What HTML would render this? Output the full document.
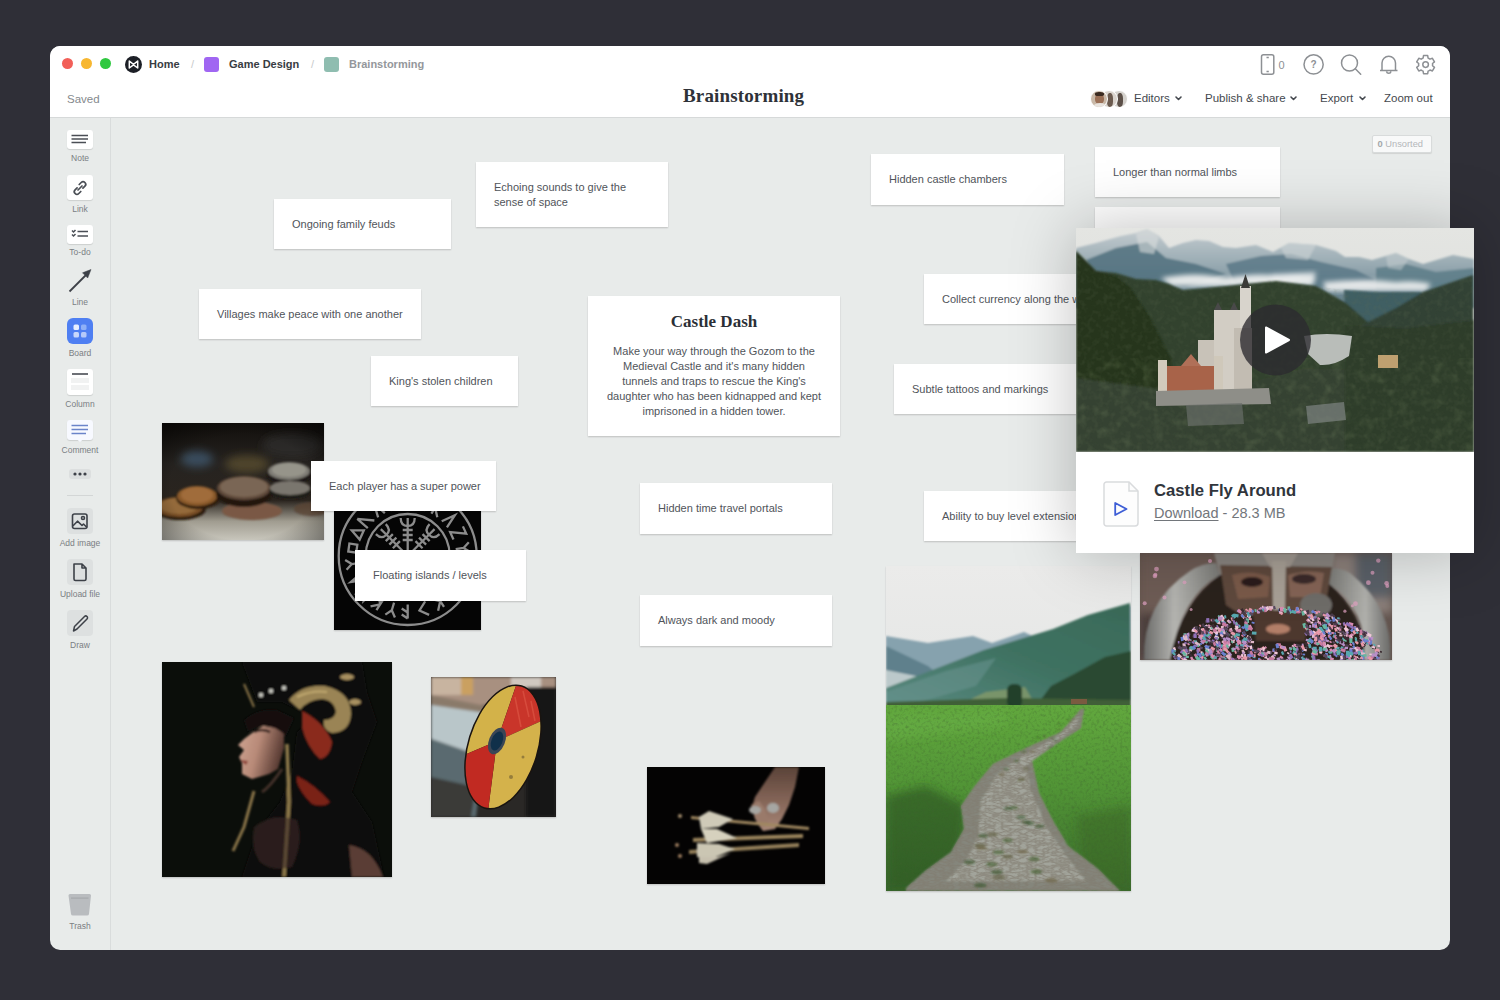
<!DOCTYPE html>
<html><head><meta charset="utf-8">
<style>
*{box-sizing:border-box;margin:0;padding:0}
html,body{width:1500px;height:1000px;overflow:hidden;background:#2f2f37;font-family:"Liberation Sans",sans-serif}
.abs{position:absolute}
#win{position:absolute;left:50px;top:46px;width:1400px;height:904px;border-radius:10px;overflow:hidden;background:#e8ebea}
#hdr{position:absolute;left:0;top:0;width:1400px;height:72px;background:#fff;border-bottom:1px solid #d6d9d9}
.dot{position:absolute;width:11px;height:11px;border-radius:50%;top:12px}
.crumb{position:absolute;top:11px;font-size:11px;font-weight:700;color:#383c42;line-height:14px}
.menu{position:absolute;top:45px;font-size:11.5px;color:#44484e;line-height:14px}
#side{position:absolute;left:0;top:72px;width:61px;height:832px;border-right:1px solid #d9dcdc}
.tile{position:absolute;left:17px;width:26px;background:#fff;border-radius:3px;box-shadow:0 1px 1px rgba(0,0,0,.12)}
.lbl{position:absolute;left:0;width:60px;text-align:center;font-size:8.5px;color:#7a7e83;line-height:10px}
.card{position:absolute;background:#fff;box-shadow:0 1px 1.5px rgba(0,0,0,.18);font-size:11px;color:#50545a;line-height:15px}
.card span{position:absolute}
.img{position:absolute;overflow:hidden;box-shadow:0 1px 1.5px rgba(0,0,0,.18)}
</style></head><body>
<div id="win">
  <div id="hdr">
    <div class="dot" style="left:12px;background:#f25f58"></div>
    <div class="dot" style="left:31px;background:#f7b731"></div>
    <div class="dot" style="left:49.5px;background:#2fc840"></div>
    <svg class="abs" style="left:74.5px;top:10px" width="17" height="17"><circle cx="8.5" cy="8.5" r="8.5" fill="#1c1f26"/><path d="M4.3 5 L8.5 8.3 L12.7 5 V12 L8.5 8.9 L4.3 12 Z" fill="none" stroke="#fff" stroke-width="1.5" stroke-linejoin="round"/></svg>
    <div class="crumb" style="left:99px">Home</div>
    <div class="crumb" style="left:141px;color:#c8cacc;font-weight:400">/</div>
    <div class="abs" style="left:154px;top:11px;width:15px;height:15px;border-radius:3px;background:#a066f2"></div>
    <div class="crumb" style="left:179px">Game Design</div>
    <div class="crumb" style="left:261px;color:#c8cacc;font-weight:400">/</div>
    <div class="abs" style="left:274px;top:11px;width:15px;height:15px;border-radius:3px;background:#8fbdb0"></div>
    <div class="crumb" style="left:299px;color:#94979b">Brainstorming</div>
    <div class="menu" style="left:17px;top:46px;color:#85898d">Saved</div>
    <div class="abs" style="left:633px;top:39px;font-family:'Liberation Serif',serif;font-weight:700;font-size:19px;color:#2e3238;line-height:22px;letter-spacing:0.15px">Brainstorming</div>
    
    <svg class="abs" style="left:1200px;top:0px" width="200" height="40"><g fill="none" stroke="#8d9094" stroke-width="1.5">
      <rect x="11.5" y="8.8" width="12.3" height="19.5" rx="2"/>
      <line x1="16.5" y1="11.5" x2="18.8" y2="11.5"/><line x1="16.5" y1="25.5" x2="18.8" y2="25.5"/>
      <circle cx="63.6" cy="18.4" r="9.6"/>
      <circle cx="99.5" cy="17" r="8"/><line x1="105.3" y1="22.8" x2="110.7" y2="28.2" stroke-linecap="round"/>
      <path d="M130 24.5 H147.5 M132 24.5 V17 A6.7 6.7 0 0 1 145.5 17 V24.5 M136.5 25.5 A2.3 2.3 0 0 0 141 25.5" stroke-linejoin="round"/>
      <circle cx="175.6" cy="18.6" r="2.8"/>
    </g>
    <path fill="none" stroke="#8d9094" stroke-width="1.5" stroke-linejoin="round" d="M172.10 12.54 L173.09 12.06 L173.51 9.54 L177.69 9.54 L178.11 12.06 L179.10 12.54 L180.01 13.16 L182.40 12.26 L184.49 15.88 L182.51 17.50 L182.60 18.60 L182.51 19.70 L184.49 21.32 L182.40 24.94 L180.01 24.04 L179.10 24.66 L178.11 25.14 L177.69 27.66 L173.51 27.66 L173.09 25.14 L172.10 24.66 L171.19 24.04 L168.80 24.94 L166.71 21.32 L168.69 19.70 L168.60 18.60 L168.69 17.50 L166.71 15.88 L168.80 12.26 L171.19 13.16 Z"/>
    <text x="63.6" y="22" text-anchor="middle" font-family="Liberation Sans" font-size="10" font-weight="700" fill="#8d9094">?</text>
    <text x="28.5" y="23" font-family="Liberation Sans" font-size="11" fill="#8d9094">0</text>
    </svg>
    <div class="abs" style="left:1060px;top:43.5px;width:18px;height:18px;border-radius:50%;background:#d5d2cd;border:1.5px solid #fff;overflow:hidden"><div class="abs" style="left:6px;top:2px;width:6px;height:14px;border-radius:40%;background:#5c5048"></div></div><div class="abs" style="left:1050px;top:43.5px;width:18px;height:18px;border-radius:50%;background:#d9d3cc;border:1.5px solid #fff;overflow:hidden"><div class="abs" style="left:6px;top:2px;width:6px;height:14px;border-radius:40%;background:#6b5a4e"></div></div><div class="abs" style="left:1040px;top:43.5px;width:18px;height:18px;border-radius:50%;background:#c9b9a8;border:1.5px solid #fff;overflow:hidden"><div class="abs" style="left:4px;top:3px;width:9px;height:10px;border-radius:45%;background:#9a6f55"></div><div class="abs" style="left:2px;top:12px;width:14px;height:8px;border-radius:50%;background:#e8e4df"></div><div class="abs" style="left:4px;top:1.5px;width:9px;height:4px;border-radius:40%;background:#3a2a20"></div></div>
    
    
    <svg class="abs" style="left:1124px;top:48px" width="300" height="10"><g fill="none" stroke="#44484e" stroke-width="1.6" stroke-linecap="round" stroke-linejoin="round"><path d="M2 3 L4.5 5.5 L7 3"/><path d="M117 3 L119.5 5.5 L122 3"/><path d="M186 3 L188.5 5.5 L191 3"/></g></svg>
<div class="menu" style="left:1084px">Editors</div>
    <div class="menu" style="left:1155px">Publish &amp; share</div>
    <div class="menu" style="left:1270px">Export</div>
    <div class="menu" style="left:1334px">Zoom out</div>
  </div>
  <div id="side">
    <div class="tile" style="top:12px;height:18.5px"><svg width="26" height="18.5" style="position:absolute;left:0;top:0"><g stroke="#4a4e55" stroke-width="1.6"><line x1="4.5" y1="5.5" x2="21" y2="5.5"/><line x1="4.5" y1="9" x2="21" y2="9"/><line x1="4.5" y1="12.5" x2="19" y2="12.5"/></g></svg></div>
    <div class="lbl" style="top:35.0px">Note</div>
    <div class="tile" style="top:56.5px;height:25.5px"><svg width="26" height="26" style="position:absolute;left:0;top:0"><g fill="none" stroke="#4a4e55" stroke-width="1.7" stroke-linecap="round"><path d="M12.2 9.5 L14.2 7.5 A2.6 2.6 0 0 1 17.9 11.2 L15.9 13.2"/><path d="M13.8 16.5 L11.8 18.5 A2.6 2.6 0 0 1 8.1 14.8 L10.1 12.8"/><line x1="11" y1="15" x2="15" y2="11"/></g></svg></div>
    <div class="lbl" style="top:86.0px">Link</div>
    <div class="tile" style="top:107px;height:18.5px"><svg width="26" height="18.5" style="position:absolute;left:0;top:0"><g fill="none" stroke="#4a4e55" stroke-width="1.5"><path d="M5 5.5 L6.5 7 L8.5 5"/><path d="M5 9.5 L6.5 11 L8.5 9"/><line x1="10.5" y1="6.5" x2="21" y2="6.5" stroke-width="1.7"/><line x1="10.5" y1="11" x2="21" y2="11" stroke-width="1.7"/></g></svg></div>
    <div class="lbl" style="top:129.2px">To-do</div>
    <svg class="abs" style="left:14px;top:147px" width="32" height="32"><g stroke="#3d4148" stroke-width="1.8" fill="#3d4148"><line x1="5.5" y1="26.5" x2="24" y2="8"/><path d="M27 4.5 L18.5 7.8 L23.7 13 Z" stroke-width="0.5"/></g></svg>
    <div class="lbl" style="top:178.7px">Line</div>
    <div class="abs" style="left:17px;top:200px;width:26px;height:26px;border-radius:6px;background:#4f7ff2"><svg width="26" height="26" style="position:absolute;left:0;top:0"><rect x="6.5" y="6.5" width="5.5" height="5.5" rx="1.5" fill="#e8efff"/><rect x="14" y="6.5" width="5.5" height="5.5" rx="1.5" fill="#8fb0f7"/><rect x="6.5" y="14" width="5.5" height="5.5" rx="1.5" fill="#c9d8fb"/><rect x="14" y="14" width="5.5" height="5.5" rx="1.5" fill="#b5c9f9"/></svg></div>
    <div class="lbl" style="top:229.7px">Board</div>
    <div class="tile" style="top:250.5px;height:26.5px"><svg width="26" height="26" style="position:absolute;left:0;top:0"><line x1="5" y1="5" x2="21" y2="5" stroke="#3d4148" stroke-width="1.5"/><rect x="4" y="9" width="18" height="5" fill="#f1f2f2"/><rect x="4" y="16" width="18" height="5" fill="#f1f2f2"/></svg></div>
    <div class="lbl" style="top:281.2px">Column</div>
    <div class="tile" style="top:302px;height:19.5px;background:#f7f9ff"><svg width="26" height="24" style="position:absolute;left:0;top:0;overflow:visible"><g stroke="#6a84c9" stroke-width="1.5"><line x1="4.5" y1="5.5" x2="21" y2="5.5"/><line x1="4.5" y1="9.5" x2="21" y2="9.5"/><line x1="4.5" y1="13.5" x2="19" y2="13.5"/></g><path d="M10 19.5 L13 22 L16 19.5 Z" fill="#f7f9ff"/></svg></div>
    <div class="lbl" style="top:327.0px">Comment</div>
    <div class="abs" style="left:19px;top:351px;width:21.5px;height:10px;border-radius:3px;background:#dcdfdf"><svg width="22" height="10" style="position:absolute;left:0;top:0"><circle cx="6" cy="5" r="1.6" fill="#3d4148"/><circle cx="11" cy="5" r="1.6" fill="#3d4148"/><circle cx="16" cy="5" r="1.6" fill="#3d4148"/></svg></div>
    <div class="abs" style="left:17px;top:376.5px;width:26px;height:1px;background:#d3d6d6"></div>
    <div class="abs" style="left:17px;top:390px;width:25.5px;height:25.5px;border-radius:4px;background:#dde0e0"><svg width="26" height="26" style="position:absolute;left:0;top:0"><g fill="none" stroke="#3d4148" stroke-width="1.6" stroke-linejoin="round"><rect x="5.5" y="6" width="14.5" height="14.5" rx="2"/><path d="M5.8 18 L10.5 13.2 L15 17.5 L16.5 16 L20 19.5"/><circle cx="16" cy="10" r="1.5"/></g></svg></div>
    <div class="lbl" style="top:419.8px">Add image</div>
    <div class="abs" style="left:17px;top:441px;width:25.5px;height:25.5px;border-radius:4px;background:#dde0e0"><svg width="26" height="26" style="position:absolute;left:0;top:0"><path d="M7 5 H15 L19 9 V20 A1.5 1.5 0 0 1 17.5 21.5 H8.5 A1.5 1.5 0 0 1 7 20 Z M15 5 V9 H19" fill="none" stroke="#3d4148" stroke-width="1.6" stroke-linejoin="round"/></svg></div>
    <div class="lbl" style="top:471.0px">Upload file</div>
    <div class="abs" style="left:17px;top:492px;width:25.5px;height:25.5px;border-radius:4px;background:#dde0e0"><svg width="26" height="26" style="position:absolute;left:0;top:0"><path d="M6.5 21 L7.5 16.5 L17.5 6.5 A1.6 1.6 0 0 1 20 9 L10 19 Z" fill="none" stroke="#3d4148" stroke-width="1.5" stroke-linejoin="round"/></svg></div>
    <div class="lbl" style="top:522.2px">Draw</div>
    <svg class="abs" style="left:18px;top:775px" width="24" height="24"><path d="M0.5 2.5 Q0.5 1 2 1 H21.5 Q23 1 23 2.5 L21 21 Q20.8 22.5 19 22.5 H5 Q3.2 22.5 3 21 Z" fill="#b9bcbf"/><rect x="3" y="4.5" width="17.5" height="1.2" fill="#a5a8ac"/></svg>
    <div class="lbl" style="top:803.4px">Trash</div>
  </div>
</div>
<!-- canvas items (page coords) -->
<div class="abs" style="left:1371.5px;top:134.5px;width:60.5px;height:18.5px;background:#f3f4f4;border:1px solid #d8dbdb;border-radius:2px;box-shadow:0 1px 1px rgba(0,0,0,.1);font-size:9.3px;line-height:16px;color:#b4b7ba;padding-left:5px;background:#f8f9f9;white-space:nowrap"><b style="color:#a4a7aa">0</b> Unsorted</div>

<div class="card" style="left:274px;top:199px;width:177px;height:50px"><span style="left:18px;top:18px">Ongoing family feuds</span></div>
<div class="card" style="left:476px;top:162px;width:192px;height:65px"><span style="left:18px;top:18px;width:160px">Echoing sounds to give the sense of space</span></div>
<div class="card" style="left:199px;top:289px;width:222px;height:50px"><span style="left:18px;top:18px">Villages make peace with one another</span></div>
<div class="card" style="left:371px;top:356px;width:147px;height:50px"><span style="left:18px;top:18px">King's stolen children</span></div>
<div class="card" style="left:588px;top:296px;width:252px;height:140px">
  <div class="abs" style="left:0;top:16.4px;width:252px;text-align:center;font-family:'Liberation Serif',serif;font-weight:700;font-size:17px;line-height:20px;color:#2b2f36">Castle Dash</div>
  <div class="abs" style="left:0;top:47.6px;width:252px;text-align:center;line-height:15px">Make your way through the Gozom to the<br>Medieval Castle and it's many hidden<br>tunnels and traps to rescue the King's<br>daughter who has been kidnapped and kept<br>imprisoned in a hidden tower.</div>
</div>
<div class="card" style="left:871px;top:154px;width:193px;height:51px"><span style="left:18px;top:18px">Hidden castle chambers</span></div>
<div class="card" style="left:1095px;top:147px;width:185px;height:50px"><span style="left:18px;top:18px">Longer than normal limbs</span></div>
<div class="card" style="left:1095px;top:207px;width:185px;height:50px"></div>
<div class="card" style="left:924px;top:274px;width:185px;height:50px"><span style="left:18px;top:18px;white-space:nowrap">Collect currency along the way</span></div>
<div class="card" style="left:894px;top:364px;width:185px;height:50px"><span style="left:18px;top:18px">Subtle tattoos and markings</span></div>
<div class="card" style="left:924px;top:491px;width:185px;height:50px"><span style="left:18px;top:18px;white-space:nowrap">Ability to buy level extensions</span></div>
<div class="card" style="left:640px;top:483px;width:192px;height:51px"><span style="left:18px;top:18px">Hidden time travel portals</span></div>
<div class="card" style="left:640px;top:595px;width:192px;height:51px"><span style="left:18px;top:18px">Always dark and moody</span></div>
<div class="img" style="left:162px;top:423px;width:162px;height:117px;"><svg width="162" height="117" viewBox="0 0 162 117">
<defs><filter id="b1" x="-20%" y="-20%" width="140%" height="140%"><feGaussianBlur stdDeviation="4"/></filter>
<filter id="b2"><feGaussianBlur stdDeviation="1"/></filter>
<linearGradient id="cg1" x1="0" y1="0" x2="0" y2="1"><stop offset="0" stop-color="#120f0c"/><stop offset="0.35" stop-color="#262320"/><stop offset="0.66" stop-color="#2a241e"/><stop offset="0.84" stop-color="#a09c90"/><stop offset="1" stop-color="#c8c6bc"/></linearGradient>
<radialGradient id="cv" cx="0.5" cy="0.55" r="0.75"><stop offset="0.6" stop-color="#000" stop-opacity="0"/><stop offset="1" stop-color="#000" stop-opacity="0.55"/></radialGradient></defs>
<rect width="162" height="117" fill="url(#cg1)"/>
<g filter="url(#b1)"><ellipse cx="35" cy="36" rx="16" ry="8" fill="#4a6a88" opacity="0.6"/><ellipse cx="85" cy="41" rx="22" ry="9" fill="#6a5a30" opacity="0.6"/><ellipse cx="130" cy="22" rx="30" ry="12" fill="#3a3a36" opacity="0.5"/></g>
<g filter="url(#b2)">
<ellipse cx="18" cy="86" rx="26" ry="11" fill="#2a1a0e"/><ellipse cx="17" cy="84" rx="24" ry="10" fill="#7a5028"/><ellipse cx="17" cy="83" rx="19" ry="8" fill="#946a3a"/>
<ellipse cx="36" cy="75" rx="22" ry="11" fill="#2e1c0c"/><ellipse cx="35" cy="73" rx="20" ry="10" fill="#8a5a2c"/><ellipse cx="35" cy="72" rx="16" ry="8" fill="#a06c3a"/>
<ellipse cx="90" cy="88" rx="30" ry="9" fill="#7a5844"/>
<ellipse cx="82" cy="71" rx="28" ry="13" fill="#201610"/><ellipse cx="82" cy="65" rx="27" ry="12" fill="#5e4a3a"/><ellipse cx="82" cy="64" rx="24" ry="10" fill="#7a6654"/>
<ellipse cx="127" cy="52" rx="22" ry="10" fill="#1a1612"/><ellipse cx="127" cy="48" rx="21" ry="9" fill="#7e7c74"/><ellipse cx="127" cy="47" rx="17" ry="7" fill="#96948a"/>
<ellipse cx="128" cy="68" rx="21" ry="8" fill="#1e1a16"/><ellipse cx="128" cy="65" rx="20" ry="7" fill="#7a766e"/>
<ellipse cx="150" cy="86" rx="18" ry="7" fill="#5a4436" opacity="0.8"/>
</g>
<rect width="162" height="117" fill="url(#cv)"/>
</svg></div>
<div class="img" style="left:334px;top:482px;width:147px;height:148px"><svg width="147" height="148" viewBox="0 0 147 148">
<rect width="147" height="148" fill="#050505"/>
<g fill="none" stroke="#8c8c8c" stroke-width="2.3" stroke-linecap="butt" stroke-linejoin="miter">
<circle cx="73.7" cy="74" r="69"/>
<circle cx="73.7" cy="74" r="42"/>
<path transform="translate(73.7 18.5) rotate(0.0)" d="M-5 7 V-7 L0 0 L5 -7 V7"/><path transform="translate(89.3 20.7) rotate(16.4)" d="M-4 -7 V7 M-4 -7 L4 -2 L-4 2 L4 7"/><path transform="translate(103.7 27.3) rotate(32.7)" d="M-3 -7 V7 M-3 0 L4 -7 M-3 0 L4 7"/><path transform="translate(115.6 37.7) rotate(49.1)" d="M-4 7 L0 -7 L4 7"/><path transform="translate(124.2 50.9) rotate(65.5)" d="M-4 -7 L4 -7 L-4 7 L4 7"/><path transform="translate(128.6 66.1) rotate(81.8)" d="M0 7 V-1 M0 -1 L-5 -7 M0 -1 L5 -7"/><path transform="translate(128.6 81.9) rotate(98.2)" d="M-5 -7 V7 M-5 -7 L5 7"/><path transform="translate(124.2 97.1) rotate(114.5)" d="M0 -6 L5 5 H-5 Z"/><path transform="translate(115.6 110.3) rotate(130.9)" d="M-5 -7 V7 M-5 -7 L5 7"/><path transform="translate(103.7 120.7) rotate(147.3)" d="M-3 -7 V7 M-3 0 L4 -7 M-3 0 L4 7"/><path transform="translate(89.3 127.3) rotate(163.6)" d="M-4 -7 L4 0 L-4 7"/><path transform="translate(73.7 129.5) rotate(180.0)" d="M0 -7 V7 M0 -7 L6 -3 M0 -1 L6 3"/><path transform="translate(58.1 127.3) rotate(196.4)" d="M0 7 V-1 M0 -1 L-5 -7 M0 -1 L5 -7"/><path transform="translate(43.7 120.7) rotate(212.7)" d="M-3 -7 V7 M-3 0 L4 -7 M-3 0 L4 7"/><path transform="translate(31.8 110.3) rotate(229.1)" d="M-5 7 V-7 L0 0 L5 -7 V7"/><path transform="translate(23.2 97.1) rotate(245.5)" d="M-4 7 L0 -7 L4 7"/><path transform="translate(18.8 81.9) rotate(261.8)" d="M0 7 V-1 M0 -1 L-5 -7 M0 -1 L5 -7"/><path transform="translate(18.8 66.1) rotate(278.2)" d="M-4 -4 H4 V4 H-4 Z"/><path transform="translate(23.2 50.9) rotate(294.5)" d="M0 -6 L5 5 H-5 Z"/><path transform="translate(31.8 37.7) rotate(310.9)" d="M-5 -7 V7 M-5 -7 L5 7"/><path transform="translate(43.7 27.3) rotate(327.3)" d="M-4 7 L0 -7 L4 7"/><path transform="translate(58.1 20.7) rotate(343.6)" d="M-4 -7 L4 0 L-4 7"/><g transform="translate(73.7 74.0) rotate(0.0)"><path d="M0 0 V-36 M-7 -38 Q-7 -30 0 -30 Q7 -30 7 -38 M0 -38 V-30 M-5 -26 H5 M-5 -21 H5 M-5 -16 H5"/></g><g transform="translate(73.7 74.0) rotate(-45.0)"><path d="M0 0 V-36 M-7 -38 Q-7 -30 0 -30 Q7 -30 7 -38 M0 -38 V-30 M-5 -26 H5 M-5 -21 H5 M-5 -16 H5"/></g><g transform="translate(73.7 74.0) rotate(45.0)"><path d="M0 0 V-36 M-7 -38 Q-7 -30 0 -30 Q7 -30 7 -38 M0 -38 V-30 M-5 -26 H5 M-5 -21 H5 M-5 -16 H5"/></g>
</g></svg></div>
<div class="card" style="left:311px;top:461px;width:185px;height:50px"><span style="left:18px;top:18px">Each player has a super power</span></div>
<div class="card" style="left:355px;top:550px;width:171px;height:51px"><span style="left:18px;top:18px">Floating islands / levels</span></div>
<div class="img" style="left:162px;top:662px;width:230px;height:215px;"><svg width="230" height="215" viewBox="0 0 230 215">
<defs><filter id="wb"><feGaussianBlur stdDeviation="0.9"/></filter><filter id="wb2" x="-50%" y="-50%" width="200%" height="200%"><feGaussianBlur stdDeviation="6"/></filter>
<linearGradient id="wface" x1="0" y1="0" x2="1" y2="0.3"><stop offset="0" stop-color="#d0a694"/><stop offset="0.5" stop-color="#b88a78"/><stop offset="1" stop-color="#5a3c34"/></linearGradient></defs>
<rect width="230" height="215" fill="#0b0e0a"/>

<g filter="url(#wb)">
<path d="M122 67 L101 64 L90 71 L82 77 L76 83 L82 88 L77 95 L80 101 L80 112 L90 117 L107 112 L116 107 L122 86 Z" fill="url(#wface)"/>
<path d="M78 98 L86 99 L84 103 Z" fill="#8a3a30"/>
<path d="M92 70 Q100 66 108 70" stroke="#2a1a18" stroke-width="2.5" fill="none"/>
<path d="M82 58 Q95 46 115 48 L132 56 L124 74 Q112 62 98 64 L86 70 Z" fill="#121010"/>
<path d="M80 0 L200 0 L205 30 L215 60 L200 100 L190 130 L210 160 L222 215 L80 215 L95 170 L118 140 L130 110 L135 70 L150 55 L120 40 L95 40 Z" fill="#0f0d0c"/>

<path d="M140 49 Q162 60 170 80 Q168 95 158 97 Q145 85 140 65 Z" fill="#8a2c1e"/>
<path d="M135 114 Q152 122 168 140 Q162 146 150 142 Q138 130 135 120 Z" fill="#7a2418"/>
<path d="M127 38 Q140 22 163 24 Q189 30 189 52 Q188 70 170 71 Q160 68 162 58 Q172 58 174 50 Q172 38 160 37 Q145 38 138 48 Z" fill="#9a8454"/>
<path d="M135 35 Q150 28 165 30" stroke="#c0a870" stroke-width="2" fill="none"/>
<path d="M92 129 L82 165 L71 189" stroke="#8a7448" stroke-width="3" fill="none"/>
<path d="M125 82 L127 140 L122 215" stroke="#8f7a4c" stroke-width="3.5" fill="none"/>
<path d="M82 22 L92 45" stroke="#8a7448" stroke-width="2"/>
<circle cx="99" cy="33" r="2.2" fill="#c8c8c0"/><circle cx="109" cy="29" r="2.2" fill="#c8c8c0"/><circle cx="122" cy="26" r="2.2" fill="#c8c8c0"/>
<ellipse cx="185" cy="15" rx="7" ry="3" fill="#a89060"/><ellipse cx="193" cy="40" rx="6" ry="3" fill="#a89060"/>
<path d="M92 165 Q110 150 135 158 Q142 180 130 205 Q110 210 98 200 Q88 185 92 165 Z" fill="#3a2a24" opacity="0.6"/>
<path d="M187 183 Q210 186 221 215 L190 215 Z" fill="#5a3e36"/>
<path d="M120 107 Q108 125 100 130" stroke="#6a4a40" stroke-width="3" fill="none" opacity="0.6"/>
</g></svg></div>
<div class="img" style="left:431px;top:677px;width:125px;height:140px;"><svg width="125" height="140" viewBox="0 0 125 140">
<defs><filter id="sb"><feGaussianBlur stdDeviation="1.5"/></filter><filter id="sb0"><feGaussianBlur stdDeviation="0.6"/></filter><clipPath id="sc"><ellipse cx="0" cy="0" rx="34" ry="63"/></clipPath></defs>
<rect width="125" height="140" fill="#2a2826"/>
<g filter="url(#sb)">
<rect x="0" y="0" width="125" height="28" fill="#a89080"/>
<rect x="0" y="0" width="40" height="18" fill="#c8b4a0"/>
<rect x="30" y="0" width="12" height="18" fill="#caa060"/>
<rect x="80" y="0" width="30" height="14" fill="#d0c8c0"/>
<path d="M0 18 L60 30 L60 38 L0 30 Z" fill="#8a7a6a"/>
<path d="M0 28 L55 36 L52 80 L0 62 Z" fill="#b9c6c9"/>
<path d="M0 62 L52 80 L45 140 L0 140 Z" fill="#5a6a70"/>
<path d="M0 100 L45 110 L40 140 L0 140 Z" fill="#3a3a38"/>
<rect x="95" y="10" width="30" height="130" fill="#161514"/>
</g>
<clipPath id="sc2"><ellipse cx="72" cy="70" rx="34" ry="63" transform="rotate(17 72 70)"/></clipPath>
<ellipse cx="72" cy="70" rx="35.5" ry="64.5" transform="rotate(17 72 70)" fill="#1a1410"/>
<g clip-path="url(#sc2)" filter="url(#sb0)">
<path d="M66 64 L10 88 L0 0 L88 0 Z" fill="#d3b24a"/>
<path d="M66 64 L88 0 L140 0 L130 35 Z" fill="#c9352a"/>
<path d="M66 64 L130 35 L140 150 L55 150 Z" fill="#d4b24c"/>
<path d="M66 64 L55 150 L0 150 L10 88 Z" fill="#c12c24"/>
<path d="M92 14 L98 40 M84 20 L90 50 M100 24 L104 44" stroke="#e05a48" stroke-width="1.5" opacity="0.6"/>
<circle cx="80" cy="100" r="2" fill="#6a5a30" opacity="0.6"/><circle cx="92" cy="80" r="1.5" fill="#6a5a30" opacity="0.6"/>
</g>
<ellipse cx="66" cy="64" rx="8" ry="14" transform="rotate(22 66 64)" fill="#3a4656"/>
<ellipse cx="66" cy="64" rx="5.5" ry="10" transform="rotate(22 66 64)" fill="#10304a"/>
</svg></div>
<div class="img" style="left:647px;top:767px;width:178px;height:117px;"><svg width="178" height="117" viewBox="0 0 178 117">
<defs><filter id="ab"><feGaussianBlur stdDeviation="0.9"/></filter><linearGradient id="hand" x1="0" y1="0" x2="0" y2="1"><stop offset="0" stop-color="#5a4238"/><stop offset="0.6" stop-color="#8a6a5c"/><stop offset="1" stop-color="#a88878"/></linearGradient></defs>
<rect width="178" height="117" fill="#040303"/>
<g filter="url(#ab)">
<path d="M128 0 L152 0 L148 20 L142 38 L135 52 L128 62 L116 64 L110 56 L105 40 L108 30 L120 12 Z" fill="url(#hand)"/>
<path d="M104 38 L108 52 L114 60 L122 58 L118 42 L112 34 Z" fill="#9a7a6a"/>
<ellipse cx="108" cy="43" rx="6" ry="4" fill="#a6a6a2"/><ellipse cx="126" cy="41" rx="6" ry="5" fill="#a6a6a2"/>
<path d="M44 49 L162 60 L162 63 L44 52 Z" fill="#a08860"/>
<path d="M46 71 L156 67 L156 71 L46 75 Z" fill="#9a845c"/>
<path d="M42 83 L152 76 L152 80 L42 87 Z" fill="#94805a"/>
<path d="M52 50 L62 44 L86 52 L72 60 L54 62 Z" fill="#cfcab8"/>
<path d="M54 62 L70 62 L90 71 L60 76 Z" fill="#d6d1be"/>
<path d="M50 76 L72 77 L88 82 L64 92 L50 90 Z" fill="#cbc6b3"/>
<path d="M52 90 L70 90 L84 86 L60 97 L52 96 Z" fill="#c6c0ae"/>
<circle cx="33" cy="49" r="2" fill="#a89070"/><circle cx="30" cy="78" r="2" fill="#a08060"/><circle cx="33" cy="89" r="2" fill="#a08060"/>
</g></svg></div>
<div class="img" style="left:886px;top:566px;width:245px;height:325px;"><svg width="245" height="325" viewBox="0 0 245 325">
<defs><filter id="lb"><feGaussianBlur stdDeviation="1.2"/></filter><filter id="lb2"><feGaussianBlur stdDeviation="5"/></filter>
<filter id="ltex" x="0" y="0" width="100%" height="100%"><feTurbulence type="fractalNoise" baseFrequency="0.35" numOctaves="2" seed="5"/><feColorMatrix values="0 0 0 0 0.05  0 0 0 0 0.12  0 0 0 0 0.03  0 0 0 -1.6 0.85"/><feComposite in2="SourceGraphic" operator="in"/></filter>
<filter id="ptex" x="0" y="0" width="100%" height="100%"><feTurbulence type="turbulence" baseFrequency="0.12 0.3" numOctaves="2" seed="9"/><feColorMatrix values="0 0 0 0 0.22  0 0 0 0 0.2  0 0 0 0 0.16  0 0 0 -2.4 1.2"/><feComposite in2="SourceGraphic" operator="in"/></filter>
<linearGradient id="lsky" x1="0" y1="0" x2="0" y2="1"><stop offset="0" stop-color="#ebebea"/><stop offset="0.5" stop-color="#e3e5e4"/><stop offset="1" stop-color="#dde1e1"/></linearGradient>
<linearGradient id="lgr" x1="0" y1="0" x2="0" y2="1"><stop offset="0" stop-color="#62a83e"/><stop offset="0.45" stop-color="#519436"/><stop offset="1" stop-color="#3a6a2c"/></linearGradient>
<linearGradient id="lmt" x1="0" y1="1" x2="1" y2="0"><stop offset="0" stop-color="#5a8a80"/><stop offset="0.5" stop-color="#3f7262"/><stop offset="1" stop-color="#3a6a58"/></linearGradient></defs>
<rect width="245" height="325" fill="url(#lsky)"/>
<g filter="url(#lb)">
<path d="M0 70 L42 77 L87 70 L106 77 L138 66 L153 73 L184 59 L202 55 L245 40 L245 140 L0 140 Z" fill="#86a2ae"/>
<path d="M0 80 L42 100 L60 115 L0 135 Z" fill="#5e808c"/>
<path d="M0 104 L30 110 L48 118 L20 128 L0 126 Z" fill="#c6d0d2" opacity="0.9"/>
<path d="M0 122 L98 84 L167 63 L202 49 L244 37 L245 140 L0 140 Z" fill="url(#lmt)"/>
<path d="M0 126 L60 105 L110 92 L90 120 L20 140 L0 140 Z" fill="#6a9490" opacity="0.55"/>
<path d="M188 108 L219 91 L245 85 L245 140 L150 140 L165 120 Z" fill="#2a4a30"/>
<path d="M70 140 L100 126 L139 121 L150 140 Z" fill="#849a6a" opacity="0.8"/>
<path d="M0 136 L60 134 L120 132 L245 134 L245 142 L0 142 Z" fill="#405e38"/>
<rect x="121" y="118" width="15" height="24" rx="6" fill="#24402a"/>
</g>
<rect x="0" y="139" width="245" height="186" fill="url(#lgr)"/>
<g filter="url(#lb2)">
<path d="M0 230 L40 220 L80 240 L70 325 L0 325 Z" fill="#2e5a25" opacity="0.7"/>
<path d="M190 250 L245 240 L245 325 L200 325 Z" fill="#3a6a2a" opacity="0.6"/>
<path d="M0 150 L120 145 L120 160 L0 175 Z" fill="#6ab045" opacity="0.5"/>
</g>
<rect x="0" y="139" width="245" height="186" fill="#000" filter="url(#ltex)" opacity="0.55"/>
<g filter="url(#lb)">
<path d="M195 143 L175 166 L140 182 L107 198 L88 221 L75 240 L78 263 L65 286 L39 305 L20 322 L20 325 L234 325 L211 302 L182 280 L166 253 L153 227 L146 195 L169 179 L195 162 L198 143 Z" fill="#85867c"/>
<path d="M193 150 L170 172 L135 190 L110 210 L95 235 L92 270 L80 295 L60 315 L200 315 L180 290 L160 260 L145 225 L140 200 L165 180 L190 160 Z" fill="#a2a49b"/>
</g>
<path d="M195 143 L175 166 L140 182 L107 198 L88 221 L75 240 L78 263 L65 286 L39 305 L20 322 L20 325 L234 325 L211 302 L182 280 L166 253 L153 227 L146 195 L169 179 L195 162 L198 143 Z" fill="#000" filter="url(#ptex)" opacity="0.6"/>
<g filter="url(#lb)"><ellipse cx="140.1" cy="255.9" rx="4.6" ry="1.7" fill="#34522a" opacity="0.6"/><ellipse cx="148.3" cy="292.9" rx="5.6" ry="2.1" fill="#3a5a28" opacity="0.6"/><ellipse cx="153.7" cy="260.3" rx="4.7" ry="1.7" fill="#34522a" opacity="0.6"/><ellipse cx="135.6" cy="213.2" rx="3.4" ry="1.3" fill="#5a5a3a" opacity="0.6"/><ellipse cx="122.0" cy="242.4" rx="4.2" ry="1.6" fill="#34522a" opacity="0.6"/><ellipse cx="121.7" cy="274.3" rx="5.1" ry="1.9" fill="#3a5a28" opacity="0.6"/><ellipse cx="150.3" cy="305.8" rx="6.0" ry="2.2" fill="#3a5a28" opacity="0.6"/><ellipse cx="93.9" cy="279.5" rx="5.3" ry="2.0" fill="#5a5a3a" opacity="0.6"/><ellipse cx="151.7" cy="171.5" rx="2.2" ry="0.8" fill="#34522a" opacity="0.6"/><ellipse cx="137.9" cy="185.6" rx="2.6" ry="1.0" fill="#3a5a28" opacity="0.6"/><ellipse cx="105.7" cy="298.3" rx="5.8" ry="2.2" fill="#3a5a28" opacity="0.6"/><ellipse cx="127.7" cy="241.7" rx="4.2" ry="1.6" fill="#3a5a28" opacity="0.6"/><ellipse cx="163.7" cy="180.9" rx="2.5" ry="0.9" fill="#3a5a28" opacity="0.6"/><ellipse cx="165.3" cy="314.3" rx="6.2" ry="2.3" fill="#6a6040" opacity="0.6"/><ellipse cx="182.4" cy="153.7" rx="1.7" ry="0.7" fill="#3a5a28" opacity="0.6"/><ellipse cx="130.6" cy="194.8" rx="2.9" ry="1.1" fill="#34522a" opacity="0.6"/><ellipse cx="135.2" cy="251.3" rx="4.5" ry="1.7" fill="#34522a" opacity="0.6"/><ellipse cx="139.9" cy="202.7" rx="3.1" ry="1.1" fill="#5a5a3a" opacity="0.6"/><ellipse cx="107.0" cy="268.4" rx="5.0" ry="1.9" fill="#5a5a3a" opacity="0.6"/><ellipse cx="97.1" cy="269.8" rx="5.0" ry="1.9" fill="#34522a" opacity="0.6"/><ellipse cx="113.1" cy="311.4" rx="6.2" ry="2.3" fill="#5a5a3a" opacity="0.6"/><ellipse cx="187.5" cy="153.1" rx="1.7" ry="0.7" fill="#6a6040" opacity="0.6"/><ellipse cx="134.4" cy="214.0" rx="3.4" ry="1.3" fill="#5a5a3a" opacity="0.6"/><ellipse cx="173.8" cy="157.9" rx="1.8" ry="0.7" fill="#3a5a28" opacity="0.6"/><ellipse cx="158.6" cy="170.2" rx="2.2" ry="0.8" fill="#5a5a3a" opacity="0.6"/><ellipse cx="115.6" cy="208.5" rx="3.3" ry="1.2" fill="#6a6040" opacity="0.6"/><ellipse cx="95.8" cy="281.9" rx="5.4" ry="2.0" fill="#6a6040" opacity="0.6"/><ellipse cx="83.5" cy="296.1" rx="5.8" ry="2.2" fill="#34522a" opacity="0.6"/><ellipse cx="146.7" cy="185.4" rx="2.6" ry="1.0" fill="#6a6040" opacity="0.6"/><ellipse cx="110.9" cy="306.1" rx="6.0" ry="2.3" fill="#34522a" opacity="0.6"/><ellipse cx="120.4" cy="203.1" rx="3.1" ry="1.1" fill="#3a5a28" opacity="0.6"/><ellipse cx="136.6" cy="285.8" rx="5.4" ry="2.0" fill="#6a6040" opacity="0.6"/><ellipse cx="94.3" cy="319.4" rx="6.4" ry="2.4" fill="#34522a" opacity="0.6"/><ellipse cx="173.3" cy="163.8" rx="2.0" ry="0.7" fill="#5a5a3a" opacity="0.6"/><ellipse cx="184.5" cy="155.4" rx="1.8" ry="0.7" fill="#6a6040" opacity="0.6"/><ellipse cx="121.4" cy="290.5" rx="5.6" ry="2.1" fill="#5a5a3a" opacity="0.6"/><ellipse cx="169.6" cy="174.8" rx="2.3" ry="0.8" fill="#34522a" opacity="0.6"/><ellipse cx="112.5" cy="286.3" rx="5.4" ry="2.0" fill="#3a5a28" opacity="0.6"/><ellipse cx="166.6" cy="172.2" rx="2.2" ry="0.8" fill="#3a5a28" opacity="0.6"/><ellipse cx="144.0" cy="257.2" rx="4.6" ry="1.7" fill="#34522a" opacity="0.6"/></g>
<rect x="185" y="133" width="16" height="5" fill="#7a5a40"/>
</svg></div>
<div class="img" style="left:1140px;top:553px;width:252px;height:107px"><svg width="252" height="107" viewBox="0 0 252 107">
<defs><filter id="vb" x="-20%" y="-20%" width="140%" height="140%"><feGaussianBlur stdDeviation="1.2"/></filter><filter id="vbb" x="-20%" y="-20%" width="140%" height="140%"><feGaussianBlur stdDeviation="5"/></filter><filter id="vb0"><feGaussianBlur stdDeviation="0.4"/></filter>
<linearGradient id="vhorn" x1="0" y1="0" x2="1" y2="0"><stop offset="0" stop-color="#6a6a68"/><stop offset="0.4" stop-color="#b4b4b0"/><stop offset="1" stop-color="#7a7a76"/></linearGradient>
<linearGradient id="vhorn2" x1="1" y1="0" x2="0" y2="0"><stop offset="0" stop-color="#6a6a68"/><stop offset="0.4" stop-color="#b0b0ac"/><stop offset="1" stop-color="#7a7a76"/></linearGradient></defs>
<rect width="252" height="107" fill="#62544e"/>
<g filter="url(#vbb)">
<rect x="0" y="0" width="80" height="70" fill="#6e5c54"/>
<rect x="190" y="0" width="62" height="60" fill="#8c807a"/>
<rect x="215" y="0" width="37" height="45" fill="#5a6068"/>
<rect x="0" y="60" width="30" height="47" fill="#4a3e3a"/>
</g>
<g filter="url(#vb)">
<path d="M4 107 Q2 50 50 18 Q62 10 76 10 L80 22 Q42 42 30 107 Z" fill="url(#vhorn)"/>
<path d="M250 107 Q254 55 210 20 Q200 14 190 16 L188 30 Q228 55 224 107 Z" fill="url(#vhorn2)"/>
<path d="M30 107 Q40 50 80 22 L188 30 Q225 60 224 107 Z" fill="#2a221e"/>
<path d="M74 0 L195 0 L192 20 L80 22 Z" fill="#8a8580"/>
<path d="M80 12 L192 14 L186 50 L170 64 L150 60 L125 60 L104 64 L86 52 Z" fill="#5e4a3e"/>
<path d="M92 22 Q110 16 130 24 L128 44 L98 46 Z" fill="#7a5a4a"/>
<path d="M148 22 Q168 16 184 20 L180 44 L150 44 Z" fill="#846454"/>
<ellipse cx="112" cy="29" rx="11" ry="5" fill="#2c1c1a"/>
<ellipse cx="164" cy="26" rx="12" ry="5" fill="#3a2c2a"/>
<path d="M122 0 L158 0 L150 14 L130 14 Z" fill="#a09890"/>
<path d="M132 8 L146 8 L145 56 L139 64 L133 56 Z" fill="#a8a096"/>
<ellipse cx="176" cy="52" rx="16" ry="12" fill="#6e6c68"/>
<path d="M113 60 Q139 54 168 60 L165 88 L116 88 Z" fill="#4e382e"/>
<ellipse cx="138" cy="76" rx="12" ry="5" fill="#b27e68"/>
</g>
<g filter="url(#vb0)"><rect x="224.1" y="77.6" width="4.4" height="3.0" fill="#b890c8" transform="rotate(24 224.1 77.6)"/><rect x="68.8" y="80.2" width="3.8" height="2.5" fill="#5a4a60" transform="rotate(23 68.8 80.2)"/><rect x="49.0" y="96.5" width="3.9" height="2.6" fill="#4a3a48" transform="rotate(76 49.0 96.5)"/><rect x="236.3" y="105.1" width="4.1" height="2.8" fill="#5a4a60" transform="rotate(83 236.3 105.1)"/><rect x="141.0" y="55.3" width="4.5" height="3.0" fill="#6a80d0" transform="rotate(76 141.0 55.3)"/><rect x="122.5" y="98.3" width="2.8" height="1.9" fill="#b890c8" transform="rotate(37 122.5 98.3)"/><rect x="239.5" y="106.8" width="4.1" height="2.7" fill="#c87aa0" transform="rotate(40 239.5 106.8)"/><rect x="189.2" y="80.2" width="2.4" height="1.6" fill="#d88ab0" transform="rotate(13 189.2 80.2)"/><rect x="114.1" y="98.6" width="2.4" height="1.6" fill="#e898a8" transform="rotate(2 114.1 98.6)"/><rect x="74.0" y="102.1" width="3.2" height="2.1" fill="#68b8a0" transform="rotate(90 74.0 102.1)"/><rect x="113.5" y="56.0" width="2.8" height="1.8" fill="#5a4a60" transform="rotate(86 113.5 56.0)"/><rect x="99.8" y="105.0" width="4.6" height="3.1" fill="#3a2a30" transform="rotate(17 99.8 105.0)"/><rect x="42.6" y="95.8" width="4.0" height="2.7" fill="#58a8b0" transform="rotate(24 42.6 95.8)"/><rect x="183.7" y="59.2" width="3.2" height="2.2" fill="#5a4a60" transform="rotate(50 183.7 59.2)"/><rect x="86.7" y="105.4" width="3.8" height="2.5" fill="#3a2a30" transform="rotate(2 86.7 105.4)"/><rect x="74.2" y="73.7" width="3.9" height="2.6" fill="#f0c8d8" transform="rotate(12 74.2 73.7)"/><rect x="122.7" y="52.5" width="3.1" height="2.1" fill="#f0c8d8" transform="rotate(37 122.7 52.5)"/><rect x="111.1" y="56.1" width="3.7" height="2.5" fill="#6a80d0" transform="rotate(31 111.1 56.1)"/><rect x="153.3" y="97.8" width="4.5" height="3.0" fill="#58a8b0" transform="rotate(23 153.3 97.8)"/><rect x="78.0" y="85.6" width="2.7" height="1.8" fill="#4a3a48" transform="rotate(80 78.0 85.6)"/><rect x="229.5" y="100.5" width="2.5" height="1.6" fill="#f0c8d8" transform="rotate(6 229.5 100.5)"/><rect x="178.0" y="66.1" width="3.5" height="2.3" fill="#f0c8d8" transform="rotate(66 178.0 66.1)"/><rect x="66.8" y="91.6" width="2.6" height="1.7" fill="#c87aa0" transform="rotate(61 66.8 91.6)"/><rect x="147.5" y="98.9" width="2.4" height="1.6" fill="#f0c8d8" transform="rotate(27 147.5 98.9)"/><rect x="123.6" y="55.3" width="3.0" height="2.0" fill="#58a8b0" transform="rotate(67 123.6 55.3)"/><rect x="106.1" y="101.0" width="3.9" height="2.6" fill="#e0b8c8" transform="rotate(88 106.1 101.0)"/><rect x="139.6" y="104.1" width="2.3" height="1.6" fill="#f0c8d8" transform="rotate(2 139.6 104.1)"/><rect x="155.7" y="56.1" width="4.1" height="2.7" fill="#c87aa0" transform="rotate(40 155.7 56.1)"/><rect x="39.3" y="103.5" width="4.0" height="2.7" fill="#4a3a48" transform="rotate(43 39.3 103.5)"/><rect x="103.9" y="89.7" width="4.5" height="3.0" fill="#c87aa0" transform="rotate(53 103.9 89.7)"/><rect x="135.0" y="52.8" width="3.2" height="2.1" fill="#5a4a60" transform="rotate(74 135.0 52.8)"/><rect x="84.0" y="74.9" width="3.2" height="2.2" fill="#e0b8c8" transform="rotate(88 84.0 74.9)"/><rect x="78.3" y="90.4" width="4.2" height="2.8" fill="#68b8a0" transform="rotate(84 78.3 90.4)"/><rect x="172.4" y="63.1" width="4.2" height="2.8" fill="#58a8b0" transform="rotate(43 172.4 63.1)"/><rect x="168.6" y="76.3" width="3.1" height="2.1" fill="#6a80d0" transform="rotate(85 168.6 76.3)"/><rect x="82.6" y="86.9" width="4.3" height="2.9" fill="#3a2a30" transform="rotate(25 82.6 86.9)"/><rect x="214.9" y="73.1" width="4.6" height="3.1" fill="#f0c8d8" transform="rotate(26 214.9 73.1)"/><rect x="58.6" y="79.3" width="4.1" height="2.7" fill="#d88ab0" transform="rotate(35 58.6 79.3)"/><rect x="129.0" y="102.9" width="3.2" height="2.2" fill="#e898a8" transform="rotate(66 129.0 102.9)"/><rect x="206.2" y="106.0" width="3.1" height="2.0" fill="#68b8a0" transform="rotate(4 206.2 106.0)"/><rect x="88.4" y="85.4" width="4.1" height="2.7" fill="#5a4a60" transform="rotate(73 88.4 85.4)"/><rect x="104.4" y="87.7" width="2.3" height="1.5" fill="#f0c8d8" transform="rotate(17 104.4 87.7)"/><rect x="191.5" y="66.7" width="2.6" height="1.7" fill="#3a2a30" transform="rotate(6 191.5 66.7)"/><rect x="52.9" y="81.4" width="4.3" height="2.9" fill="#5a4a60" transform="rotate(9 52.9 81.4)"/><rect x="173.7" y="63.0" width="2.9" height="1.9" fill="#68b8a0" transform="rotate(1 173.7 63.0)"/><rect x="188.6" y="81.4" width="2.7" height="1.8" fill="#d88ab0" transform="rotate(34 188.6 81.4)"/><rect x="193.5" y="81.7" width="3.5" height="2.4" fill="#b890c8" transform="rotate(20 193.5 81.7)"/><rect x="112.6" y="95.6" width="2.5" height="1.6" fill="#6a80d0" transform="rotate(49 112.6 95.6)"/><rect x="57.3" y="76.9" width="4.5" height="3.0" fill="#5a4a60" transform="rotate(0 57.3 76.9)"/><rect x="109.1" y="83.3" width="4.3" height="2.9" fill="#b890c8" transform="rotate(43 109.1 83.3)"/><rect x="73.0" y="91.7" width="3.9" height="2.6" fill="#3a2a30" transform="rotate(15 73.0 91.7)"/><rect x="74.8" y="101.5" width="4.7" height="3.2" fill="#c87aa0" transform="rotate(68 74.8 101.5)"/><rect x="235.1" y="103.3" width="4.6" height="3.0" fill="#9070b8" transform="rotate(2 235.1 103.3)"/><rect x="103.2" y="56.6" width="3.1" height="2.1" fill="#68b8a0" transform="rotate(53 103.2 56.6)"/><rect x="191.3" y="78.8" width="2.8" height="1.9" fill="#d88ab0" transform="rotate(8 191.3 78.8)"/><rect x="120.1" y="53.9" width="3.1" height="2.1" fill="#b890c8" transform="rotate(17 120.1 53.9)"/><rect x="128.8" y="107.0" width="3.6" height="2.4" fill="#4a3a48" transform="rotate(86 128.8 107.0)"/><rect x="174.8" y="104.0" width="3.7" height="2.5" fill="#68b8a0" transform="rotate(88 174.8 104.0)"/><rect x="183.1" y="87.1" width="3.6" height="2.4" fill="#b890c8" transform="rotate(71 183.1 87.1)"/><rect x="83.9" y="88.9" width="2.8" height="1.9" fill="#f0c8d8" transform="rotate(18 83.9 88.9)"/><rect x="157.1" y="53.5" width="3.6" height="2.4" fill="#d88ab0" transform="rotate(51 157.1 53.5)"/><rect x="144.2" y="106.4" width="3.5" height="2.3" fill="#c87aa0" transform="rotate(88 144.2 106.4)"/><rect x="65.0" y="103.2" width="3.3" height="2.2" fill="#68b8a0" transform="rotate(51 65.0 103.2)"/><rect x="86.5" y="78.0" width="3.1" height="2.1" fill="#58a8b0" transform="rotate(60 86.5 78.0)"/><rect x="140.2" y="58.0" width="3.8" height="2.6" fill="#e898a8" transform="rotate(33 140.2 58.0)"/><rect x="57.2" y="94.9" width="2.3" height="1.6" fill="#d88ab0" transform="rotate(19 57.2 94.9)"/><rect x="77.7" y="89.8" width="4.1" height="2.7" fill="#e0b8c8" transform="rotate(31 77.7 89.8)"/><rect x="160.2" y="57.8" width="3.7" height="2.5" fill="#4a3a48" transform="rotate(65 160.2 57.8)"/><rect x="160.9" y="91.5" width="3.6" height="2.4" fill="#4a3a48" transform="rotate(55 160.9 91.5)"/><rect x="203.3" y="85.9" width="2.8" height="1.8" fill="#b890c8" transform="rotate(80 203.3 85.9)"/><rect x="75.4" y="81.9" width="4.4" height="3.0" fill="#f0c8d8" transform="rotate(29 75.4 81.9)"/><rect x="222.1" y="86.5" width="4.6" height="3.0" fill="#e0b8c8" transform="rotate(40 222.1 86.5)"/><rect x="156.7" y="101.0" width="2.8" height="1.9" fill="#6a80d0" transform="rotate(24 156.7 101.0)"/><rect x="80.3" y="92.0" width="3.2" height="2.2" fill="#9070b8" transform="rotate(55 80.3 92.0)"/><rect x="204.8" y="75.2" width="4.0" height="2.7" fill="#3a2a30" transform="rotate(25 204.8 75.2)"/><rect x="173.3" y="102.1" width="2.5" height="1.7" fill="#e0b8c8" transform="rotate(64 173.3 102.1)"/><rect x="239.7" y="97.8" width="2.4" height="1.6" fill="#3a2a30" transform="rotate(13 239.7 97.8)"/><rect x="35.1" y="93.9" width="3.6" height="2.4" fill="#f0c8d8" transform="rotate(72 35.1 93.9)"/><rect x="171.3" y="83.9" width="4.7" height="3.1" fill="#58a8b0" transform="rotate(59 171.3 83.9)"/><rect x="104.5" y="63.6" width="2.3" height="1.5" fill="#e0b8c8" transform="rotate(89 104.5 63.6)"/><rect x="107.7" y="102.7" width="2.7" height="1.8" fill="#f0c8d8" transform="rotate(65 107.7 102.7)"/><rect x="196.4" y="69.8" width="4.3" height="2.9" fill="#c87aa0" transform="rotate(90 196.4 69.8)"/><rect x="213.9" y="102.0" width="3.7" height="2.5" fill="#e898a8" transform="rotate(24 213.9 102.0)"/><rect x="135.9" y="106.0" width="4.2" height="2.8" fill="#3a2a30" transform="rotate(35 135.9 106.0)"/><rect x="221.4" y="92.9" width="2.7" height="1.8" fill="#3a2a30" transform="rotate(51 221.4 92.9)"/><rect x="197.4" y="68.6" width="2.3" height="1.5" fill="#c87aa0" transform="rotate(45 197.4 68.6)"/><rect x="238.0" y="101.6" width="2.8" height="1.9" fill="#d88ab0" transform="rotate(85 238.0 101.6)"/><rect x="92.8" y="63.9" width="3.7" height="2.5" fill="#e898a8" transform="rotate(68 92.8 63.9)"/><rect x="46.1" y="80.3" width="3.9" height="2.6" fill="#68b8a0" transform="rotate(89 46.1 80.3)"/><rect x="55.1" y="73.7" width="2.3" height="1.5" fill="#f0c8d8" transform="rotate(78 55.1 73.7)"/><rect x="189.9" y="87.6" width="2.5" height="1.7" fill="#d88ab0" transform="rotate(32 189.9 87.6)"/><rect x="87.9" y="70.7" width="3.5" height="2.4" fill="#b890c8" transform="rotate(66 87.9 70.7)"/><rect x="149.3" y="106.7" width="3.4" height="2.3" fill="#5a4a60" transform="rotate(82 149.3 106.7)"/><rect x="46.0" y="84.9" width="4.7" height="3.1" fill="#3a2a30" transform="rotate(49 46.0 84.9)"/><rect x="42.3" y="104.0" width="3.0" height="2.0" fill="#e898a8" transform="rotate(51 42.3 104.0)"/><rect x="90.0" y="88.0" width="4.6" height="3.1" fill="#b890c8" transform="rotate(84 90.0 88.0)"/><rect x="180.5" y="68.3" width="4.2" height="2.8" fill="#d88ab0" transform="rotate(74 180.5 68.3)"/><rect x="188.5" y="73.4" width="4.2" height="2.8" fill="#e0b8c8" transform="rotate(6 188.5 73.4)"/><rect x="152.2" y="91.8" width="2.4" height="1.6" fill="#e0b8c8" transform="rotate(28 152.2 91.8)"/><rect x="139.9" y="103.5" width="4.6" height="3.0" fill="#4a3a48" transform="rotate(18 139.9 103.5)"/><rect x="235.6" y="96.9" width="4.1" height="2.7" fill="#f0c8d8" transform="rotate(6 235.6 96.9)"/><rect x="193.4" y="81.2" width="4.7" height="3.1" fill="#58a8b0" transform="rotate(16 193.4 81.2)"/><rect x="217.5" y="95.1" width="4.4" height="2.9" fill="#f0c8d8" transform="rotate(35 217.5 95.1)"/><rect x="87.0" y="89.7" width="4.0" height="2.7" fill="#f0c8d8" transform="rotate(24 87.0 89.7)"/><rect x="163.0" y="93.4" width="4.7" height="3.1" fill="#6a80d0" transform="rotate(64 163.0 93.4)"/><rect x="235.7" y="102.4" width="2.4" height="1.6" fill="#5a4a60" transform="rotate(7 235.7 102.4)"/><rect x="76.7" y="67.3" width="2.5" height="1.6" fill="#3a2a30" transform="rotate(86 76.7 67.3)"/><rect x="104.4" y="70.6" width="4.1" height="2.8" fill="#68b8a0" transform="rotate(9 104.4 70.6)"/><rect x="198.5" y="76.6" width="4.4" height="2.9" fill="#f0c8d8" transform="rotate(27 198.5 76.6)"/><rect x="123.3" y="93.1" width="4.3" height="2.9" fill="#e898a8" transform="rotate(47 123.3 93.1)"/><rect x="62.2" y="98.0" width="3.1" height="2.1" fill="#f0c8d8" transform="rotate(70 62.2 98.0)"/><rect x="189.4" y="97.4" width="3.3" height="2.2" fill="#58a8b0" transform="rotate(47 189.4 97.4)"/><rect x="98.1" y="81.9" width="3.7" height="2.5" fill="#e898a8" transform="rotate(62 98.1 81.9)"/><rect x="201.2" y="77.5" width="2.3" height="1.5" fill="#3a2a30" transform="rotate(39 201.2 77.5)"/><rect x="74.8" y="88.4" width="4.0" height="2.7" fill="#c87aa0" transform="rotate(63 74.8 88.4)"/><rect x="182.2" y="90.2" width="4.5" height="3.0" fill="#9070b8" transform="rotate(28 182.2 90.2)"/><rect x="105.1" y="91.9" width="4.6" height="3.0" fill="#e0b8c8" transform="rotate(41 105.1 91.9)"/><rect x="178.9" y="83.3" width="4.6" height="3.1" fill="#5a4a60" transform="rotate(56 178.9 83.3)"/><rect x="141.3" y="106.6" width="3.1" height="2.0" fill="#68b8a0" transform="rotate(51 141.3 106.6)"/><rect x="233.2" y="92.1" width="2.9" height="1.9" fill="#b890c8" transform="rotate(46 233.2 92.1)"/><rect x="172.2" y="84.2" width="2.7" height="1.8" fill="#3a2a30" transform="rotate(72 172.2 84.2)"/><rect x="107.3" y="73.5" width="4.4" height="2.9" fill="#58a8b0" transform="rotate(72 107.3 73.5)"/><rect x="125.4" y="99.0" width="2.3" height="1.5" fill="#3a2a30" transform="rotate(66 125.4 99.0)"/><rect x="206.8" y="75.3" width="3.6" height="2.4" fill="#f0c8d8" transform="rotate(69 206.8 75.3)"/><rect x="184.8" y="101.4" width="2.3" height="1.5" fill="#c87aa0" transform="rotate(83 184.8 101.4)"/><rect x="60.2" y="93.0" width="3.3" height="2.2" fill="#5a4a60" transform="rotate(28 60.2 93.0)"/><rect x="132.7" y="101.9" width="4.2" height="2.8" fill="#e0b8c8" transform="rotate(50 132.7 101.9)"/><rect x="103.6" y="96.4" width="4.0" height="2.6" fill="#e0b8c8" transform="rotate(63 103.6 96.4)"/><rect x="132.5" y="96.3" width="4.1" height="2.7" fill="#c87aa0" transform="rotate(5 132.5 96.3)"/><rect x="116.2" y="97.4" width="3.1" height="2.1" fill="#5a4a60" transform="rotate(0 116.2 97.4)"/><rect x="199.2" y="97.9" width="4.7" height="3.1" fill="#68b8a0" transform="rotate(81 199.2 97.9)"/><rect x="223.9" y="102.4" width="4.1" height="2.8" fill="#6a80d0" transform="rotate(81 223.9 102.4)"/><rect x="108.9" y="61.2" width="3.2" height="2.2" fill="#6a80d0" transform="rotate(67 108.9 61.2)"/><rect x="91.3" y="105.3" width="3.5" height="2.3" fill="#d88ab0" transform="rotate(14 91.3 105.3)"/><rect x="93.7" y="60.6" width="4.6" height="3.1" fill="#58a8b0" transform="rotate(58 93.7 60.6)"/><rect x="198.1" y="69.2" width="2.7" height="1.8" fill="#6a80d0" transform="rotate(27 198.1 69.2)"/><rect x="122.8" y="101.2" width="2.7" height="1.8" fill="#e898a8" transform="rotate(39 122.8 101.2)"/><rect x="161.6" y="103.8" width="3.5" height="2.3" fill="#b890c8" transform="rotate(33 161.6 103.8)"/><rect x="230.7" y="88.3" width="4.7" height="3.1" fill="#3a2a30" transform="rotate(61 230.7 88.3)"/><rect x="211.1" y="74.0" width="4.7" height="3.1" fill="#6a80d0" transform="rotate(49 211.1 74.0)"/><rect x="235.0" y="95.7" width="3.0" height="2.0" fill="#3a2a30" transform="rotate(7 235.0 95.7)"/><rect x="168.1" y="65.1" width="4.5" height="3.0" fill="#d88ab0" transform="rotate(47 168.1 65.1)"/><rect x="118.5" y="100.1" width="2.7" height="1.8" fill="#e898a8" transform="rotate(41 118.5 100.1)"/><rect x="60.4" y="101.9" width="3.6" height="2.4" fill="#3a2a30" transform="rotate(81 60.4 101.9)"/><rect x="185.8" y="86.1" width="3.6" height="2.4" fill="#b890c8" transform="rotate(19 185.8 86.1)"/><rect x="72.9" y="102.4" width="4.3" height="2.9" fill="#58a8b0" transform="rotate(10 72.9 102.4)"/><rect x="103.9" y="85.8" width="2.5" height="1.7" fill="#b890c8" transform="rotate(61 103.9 85.8)"/><rect x="175.7" y="56.6" width="3.7" height="2.5" fill="#4a3a48" transform="rotate(64 175.7 56.6)"/><rect x="93.8" y="95.4" width="2.7" height="1.8" fill="#e898a8" transform="rotate(87 93.8 95.4)"/><rect x="49.1" y="97.4" width="2.3" height="1.6" fill="#6a80d0" transform="rotate(52 49.1 97.4)"/><rect x="204.7" y="69.1" width="3.3" height="2.2" fill="#9070b8" transform="rotate(71 204.7 69.1)"/><rect x="94.2" y="77.7" width="2.4" height="1.6" fill="#4a3a48" transform="rotate(9 94.2 77.7)"/><rect x="174.3" y="57.8" width="4.0" height="2.6" fill="#e898a8" transform="rotate(15 174.3 57.8)"/><rect x="109.2" y="91.1" width="3.0" height="2.0" fill="#6a80d0" transform="rotate(14 109.2 91.1)"/><rect x="126.2" y="52.6" width="4.1" height="2.7" fill="#3a2a30" transform="rotate(78 126.2 52.6)"/><rect x="61.9" y="86.5" width="4.2" height="2.8" fill="#b890c8" transform="rotate(43 61.9 86.5)"/><rect x="188.5" y="82.6" width="2.9" height="1.9" fill="#c87aa0" transform="rotate(25 188.5 82.6)"/><rect x="109.1" y="58.0" width="4.7" height="3.1" fill="#9070b8" transform="rotate(72 109.1 58.0)"/><rect x="51.4" y="86.2" width="4.0" height="2.7" fill="#58a8b0" transform="rotate(90 51.4 86.2)"/><rect x="177.8" y="57.5" width="2.7" height="1.8" fill="#d88ab0" transform="rotate(15 177.8 57.5)"/><rect x="121.1" y="94.4" width="4.6" height="3.1" fill="#e0b8c8" transform="rotate(54 121.1 94.4)"/><rect x="175.2" y="78.6" width="3.8" height="2.6" fill="#e898a8" transform="rotate(51 175.2 78.6)"/><rect x="195.6" y="65.5" width="3.6" height="2.4" fill="#f0c8d8" transform="rotate(33 195.6 65.5)"/><rect x="99.5" y="70.8" width="3.4" height="2.3" fill="#5a4a60" transform="rotate(71 99.5 70.8)"/><rect x="109.3" y="80.0" width="3.0" height="2.0" fill="#3a2a30" transform="rotate(13 109.3 80.0)"/><rect x="191.0" y="101.7" width="2.8" height="1.9" fill="#b890c8" transform="rotate(78 191.0 101.7)"/><rect x="179.8" y="106.3" width="4.8" height="3.2" fill="#b890c8" transform="rotate(90 179.8 106.3)"/><rect x="228.4" y="86.5" width="4.2" height="2.8" fill="#6a80d0" transform="rotate(17 228.4 86.5)"/><rect x="81.4" y="83.7" width="3.1" height="2.1" fill="#4a3a48" transform="rotate(11 81.4 83.7)"/><rect x="219.9" y="81.9" width="2.4" height="1.6" fill="#b890c8" transform="rotate(33 219.9 81.9)"/><rect x="65.4" y="93.0" width="3.8" height="2.5" fill="#e0b8c8" transform="rotate(15 65.4 93.0)"/><rect x="173.9" y="72.0" width="3.7" height="2.5" fill="#3a2a30" transform="rotate(21 173.9 72.0)"/><rect x="69.0" y="82.1" width="3.4" height="2.3" fill="#c87aa0" transform="rotate(51 69.0 82.1)"/><rect x="67.8" y="106.3" width="2.6" height="1.7" fill="#5a4a60" transform="rotate(85 67.8 106.3)"/><rect x="207.9" y="101.9" width="3.8" height="2.5" fill="#f0c8d8" transform="rotate(2 207.9 101.9)"/><rect x="63.3" y="74.7" width="2.6" height="1.7" fill="#d88ab0" transform="rotate(49 63.3 74.7)"/><rect x="54.8" y="74.3" width="3.6" height="2.4" fill="#e0b8c8" transform="rotate(33 54.8 74.3)"/><rect x="81.3" y="103.2" width="3.9" height="2.6" fill="#d88ab0" transform="rotate(4 81.3 103.2)"/><rect x="181.5" y="95.3" width="4.7" height="3.1" fill="#e898a8" transform="rotate(76 181.5 95.3)"/><rect x="218.3" y="102.2" width="4.2" height="2.8" fill="#f0c8d8" transform="rotate(36 218.3 102.2)"/><rect x="132.0" y="106.7" width="3.3" height="2.2" fill="#4a3a48" transform="rotate(55 132.0 106.7)"/><rect x="35.1" y="101.9" width="4.1" height="2.7" fill="#9070b8" transform="rotate(55 35.1 101.9)"/><rect x="183.7" y="84.9" width="4.3" height="2.8" fill="#3a2a30" transform="rotate(75 183.7 84.9)"/><rect x="213.3" y="105.5" width="4.0" height="2.7" fill="#68b8a0" transform="rotate(67 213.3 105.5)"/><rect x="221.1" y="82.0" width="3.3" height="2.2" fill="#5a4a60" transform="rotate(30 221.1 82.0)"/><rect x="214.7" y="107.0" width="4.7" height="3.1" fill="#4a3a48" transform="rotate(85 214.7 107.0)"/><rect x="107.4" y="82.0" width="4.3" height="2.9" fill="#f0c8d8" transform="rotate(28 107.4 82.0)"/><rect x="166.4" y="75.2" width="4.6" height="3.0" fill="#c87aa0" transform="rotate(12 166.4 75.2)"/><rect x="215.3" y="83.7" width="2.3" height="1.5" fill="#68b8a0" transform="rotate(31 215.3 83.7)"/><rect x="66.1" y="76.2" width="4.3" height="2.9" fill="#68b8a0" transform="rotate(50 66.1 76.2)"/><rect x="59.7" y="90.1" width="2.4" height="1.6" fill="#6a80d0" transform="rotate(3 59.7 90.1)"/><rect x="98.1" y="59.9" width="4.7" height="3.2" fill="#3a2a30" transform="rotate(60 98.1 59.9)"/><rect x="210.4" y="90.1" width="2.7" height="1.8" fill="#d88ab0" transform="rotate(45 210.4 90.1)"/><rect x="163.4" y="90.4" width="2.8" height="1.8" fill="#b890c8" transform="rotate(80 163.4 90.4)"/><rect x="79.6" y="104.2" width="3.9" height="2.6" fill="#d88ab0" transform="rotate(39 79.6 104.2)"/><rect x="182.4" y="69.2" width="4.5" height="3.0" fill="#9070b8" transform="rotate(17 182.4 69.2)"/><rect x="100.3" y="104.6" width="3.4" height="2.3" fill="#3a2a30" transform="rotate(10 100.3 104.6)"/><rect x="65.6" y="99.4" width="4.1" height="2.7" fill="#c87aa0" transform="rotate(25 65.6 99.4)"/><rect x="86.5" y="91.6" width="3.9" height="2.6" fill="#b890c8" transform="rotate(34 86.5 91.6)"/><rect x="108.2" y="88.4" width="3.8" height="2.5" fill="#c87aa0" transform="rotate(29 108.2 88.4)"/><rect x="235.2" y="101.3" width="4.0" height="2.6" fill="#58a8b0" transform="rotate(35 235.2 101.3)"/><rect x="57.8" y="88.7" width="4.8" height="3.2" fill="#68b8a0" transform="rotate(56 57.8 88.7)"/><rect x="64.5" y="106.4" width="2.9" height="1.9" fill="#6a80d0" transform="rotate(35 64.5 106.4)"/><rect x="218.6" y="86.2" width="3.7" height="2.5" fill="#3a2a30" transform="rotate(0 218.6 86.2)"/><rect x="225.1" y="79.5" width="2.4" height="1.6" fill="#58a8b0" transform="rotate(82 225.1 79.5)"/><rect x="131.5" y="53.8" width="3.5" height="2.4" fill="#9070b8" transform="rotate(81 131.5 53.8)"/><rect x="173.7" y="80.6" width="2.7" height="1.8" fill="#b890c8" transform="rotate(21 173.7 80.6)"/><rect x="53.5" y="76.0" width="3.4" height="2.2" fill="#5a4a60" transform="rotate(32 53.5 76.0)"/><rect x="195.2" y="95.5" width="2.9" height="1.9" fill="#6a80d0" transform="rotate(69 195.2 95.5)"/><rect x="76.5" y="83.9" width="2.9" height="1.9" fill="#68b8a0" transform="rotate(25 76.5 83.9)"/><rect x="155.3" y="91.3" width="3.4" height="2.3" fill="#f0c8d8" transform="rotate(23 155.3 91.3)"/><rect x="98.3" y="85.5" width="3.5" height="2.3" fill="#f0c8d8" transform="rotate(55 98.3 85.5)"/><rect x="135.8" y="91.8" width="2.3" height="1.6" fill="#3a2a30" transform="rotate(14 135.8 91.8)"/><rect x="220.5" y="83.3" width="3.7" height="2.5" fill="#b890c8" transform="rotate(30 220.5 83.3)"/><rect x="160.9" y="55.0" width="2.4" height="1.6" fill="#e898a8" transform="rotate(40 160.9 55.0)"/><rect x="202.1" y="92.6" width="2.9" height="2.0" fill="#3a2a30" transform="rotate(75 202.1 92.6)"/><rect x="82.1" y="79.3" width="4.4" height="2.9" fill="#5a4a60" transform="rotate(58 82.1 79.3)"/><rect x="106.5" y="63.9" width="2.6" height="1.7" fill="#d88ab0" transform="rotate(76 106.5 63.9)"/><rect x="125.6" y="93.0" width="2.3" height="1.5" fill="#d88ab0" transform="rotate(52 125.6 93.0)"/><rect x="119.1" y="56.2" width="4.0" height="2.7" fill="#d88ab0" transform="rotate(78 119.1 56.2)"/><rect x="78.3" y="65.9" width="4.4" height="3.0" fill="#b890c8" transform="rotate(53 78.3 65.9)"/><rect x="126.9" y="103.3" width="3.0" height="2.0" fill="#e0b8c8" transform="rotate(78 126.9 103.3)"/><rect x="152.9" y="106.7" width="3.1" height="2.1" fill="#4a3a48" transform="rotate(88 152.9 106.7)"/><rect x="221.5" y="100.6" width="3.4" height="2.3" fill="#58a8b0" transform="rotate(50 221.5 100.6)"/><rect x="109.5" y="54.7" width="3.1" height="2.1" fill="#e898a8" transform="rotate(23 109.5 54.7)"/><rect x="196.6" y="96.2" width="2.8" height="1.8" fill="#68b8a0" transform="rotate(27 196.6 96.2)"/><rect x="154.7" y="93.8" width="3.4" height="2.3" fill="#68b8a0" transform="rotate(80 154.7 93.8)"/><rect x="172.6" y="99.4" width="3.6" height="2.4" fill="#6a80d0" transform="rotate(53 172.6 99.4)"/><rect x="45.3" y="90.0" width="4.7" height="3.1" fill="#e0b8c8" transform="rotate(79 45.3 90.0)"/><rect x="85.1" y="73.6" width="4.1" height="2.7" fill="#5a4a60" transform="rotate(34 85.1 73.6)"/><rect x="182.9" y="94.7" width="4.2" height="2.8" fill="#58a8b0" transform="rotate(15 182.9 94.7)"/><rect x="110.7" y="56.6" width="3.1" height="2.1" fill="#e898a8" transform="rotate(66 110.7 56.6)"/><rect x="170.5" y="68.6" width="2.9" height="1.9" fill="#f0c8d8" transform="rotate(5 170.5 68.6)"/><rect x="69.4" y="80.3" width="2.3" height="1.6" fill="#58a8b0" transform="rotate(39 69.4 80.3)"/><rect x="175.7" y="80.4" width="2.9" height="1.9" fill="#b890c8" transform="rotate(57 175.7 80.4)"/><rect x="169.9" y="60.1" width="4.4" height="2.9" fill="#6a80d0" transform="rotate(68 169.9 60.1)"/><rect x="179.7" y="74.3" width="3.6" height="2.4" fill="#e898a8" transform="rotate(45 179.7 74.3)"/><rect x="77.5" y="68.1" width="3.8" height="2.5" fill="#e0b8c8" transform="rotate(17 77.5 68.1)"/><rect x="199.8" y="105.7" width="3.9" height="2.6" fill="#9070b8" transform="rotate(8 199.8 105.7)"/><rect x="174.7" y="88.7" width="4.5" height="3.0" fill="#3a2a30" transform="rotate(30 174.7 88.7)"/><rect x="194.5" y="66.3" width="3.3" height="2.2" fill="#3a2a30" transform="rotate(50 194.5 66.3)"/><rect x="177.7" y="64.2" width="2.8" height="1.8" fill="#e898a8" transform="rotate(21 177.7 64.2)"/><rect x="103.7" y="91.2" width="2.5" height="1.7" fill="#b890c8" transform="rotate(43 103.7 91.2)"/><rect x="220.6" y="96.2" width="3.7" height="2.5" fill="#68b8a0" transform="rotate(89 220.6 96.2)"/><rect x="209.1" y="69.0" width="4.6" height="3.0" fill="#d88ab0" transform="rotate(15 209.1 69.0)"/><rect x="106.5" y="55.5" width="2.9" height="2.0" fill="#e898a8" transform="rotate(48 106.5 55.5)"/><rect x="102.9" y="101.0" width="3.0" height="2.0" fill="#f0c8d8" transform="rotate(85 102.9 101.0)"/><rect x="216.3" y="87.3" width="3.8" height="2.5" fill="#e898a8" transform="rotate(46 216.3 87.3)"/><rect x="158.7" y="55.5" width="4.4" height="2.9" fill="#c87aa0" transform="rotate(57 158.7 55.5)"/><rect x="110.2" y="102.0" width="4.3" height="2.9" fill="#d88ab0" transform="rotate(87 110.2 102.0)"/><rect x="105.7" y="105.7" width="3.8" height="2.5" fill="#58a8b0" transform="rotate(34 105.7 105.7)"/><rect x="78.0" y="89.4" width="3.6" height="2.4" fill="#6a80d0" transform="rotate(69 78.0 89.4)"/><rect x="144.9" y="98.7" width="3.6" height="2.4" fill="#3a2a30" transform="rotate(79 144.9 98.7)"/><rect x="202.9" y="100.6" width="4.7" height="3.1" fill="#4a3a48" transform="rotate(42 202.9 100.6)"/><rect x="34.1" y="96.3" width="4.0" height="2.7" fill="#6a80d0" transform="rotate(87 34.1 96.3)"/><rect x="63.8" y="70.3" width="3.5" height="2.3" fill="#4a3a48" transform="rotate(72 63.8 70.3)"/><rect x="91.7" y="74.8" width="4.2" height="2.8" fill="#e0b8c8" transform="rotate(68 91.7 74.8)"/><rect x="106.1" y="90.8" width="4.1" height="2.8" fill="#b890c8" transform="rotate(8 106.1 90.8)"/><rect x="237.7" y="97.0" width="3.0" height="2.0" fill="#4a3a48" transform="rotate(57 237.7 97.0)"/><rect x="102.4" y="73.9" width="4.3" height="2.9" fill="#4a3a48" transform="rotate(50 102.4 73.9)"/><rect x="83.1" y="86.9" width="4.1" height="2.7" fill="#e0b8c8" transform="rotate(41 83.1 86.9)"/><rect x="68.6" y="99.1" width="4.4" height="2.9" fill="#6a80d0" transform="rotate(16 68.6 99.1)"/><rect x="178.5" y="86.3" width="4.3" height="2.9" fill="#9070b8" transform="rotate(16 178.5 86.3)"/><rect x="72.2" y="86.2" width="2.8" height="1.9" fill="#9070b8" transform="rotate(23 72.2 86.2)"/><rect x="175.7" y="95.5" width="2.9" height="2.0" fill="#58a8b0" transform="rotate(34 175.7 95.5)"/><rect x="113.3" y="103.3" width="2.4" height="1.6" fill="#58a8b0" transform="rotate(15 113.3 103.3)"/><rect x="104.9" y="81.6" width="2.6" height="1.7" fill="#3a2a30" transform="rotate(42 104.9 81.6)"/><rect x="220.0" y="97.8" width="2.7" height="1.8" fill="#68b8a0" transform="rotate(8 220.0 97.8)"/><rect x="94.9" y="96.0" width="3.0" height="2.0" fill="#5a4a60" transform="rotate(50 94.9 96.0)"/><rect x="181.6" y="74.5" width="4.8" height="3.2" fill="#58a8b0" transform="rotate(49 181.6 74.5)"/><rect x="171.7" y="63.9" width="4.3" height="2.9" fill="#9070b8" transform="rotate(18 171.7 63.9)"/><rect x="122.9" y="97.9" width="4.6" height="3.1" fill="#b890c8" transform="rotate(32 122.9 97.9)"/><rect x="214.9" y="75.8" width="3.1" height="2.1" fill="#58a8b0" transform="rotate(2 214.9 75.8)"/><rect x="86.7" y="83.3" width="3.8" height="2.6" fill="#9070b8" transform="rotate(35 86.7 83.3)"/><rect x="97.7" y="56.5" width="3.2" height="2.1" fill="#6a80d0" transform="rotate(33 97.7 56.5)"/><rect x="100.6" y="59.7" width="2.8" height="1.8" fill="#3a2a30" transform="rotate(52 100.6 59.7)"/><rect x="199.5" y="73.8" width="2.8" height="1.9" fill="#d88ab0" transform="rotate(78 199.5 73.8)"/><rect x="167.9" y="86.3" width="2.7" height="1.8" fill="#9070b8" transform="rotate(37 167.9 86.3)"/><rect x="211.6" y="106.7" width="3.7" height="2.5" fill="#68b8a0" transform="rotate(6 211.6 106.7)"/><rect x="188.2" y="69.1" width="3.4" height="2.3" fill="#b890c8" transform="rotate(26 188.2 69.1)"/><rect x="191.0" y="66.6" width="4.3" height="2.8" fill="#6a80d0" transform="rotate(63 191.0 66.6)"/><rect x="113.8" y="96.2" width="4.2" height="2.8" fill="#5a4a60" transform="rotate(12 113.8 96.2)"/><rect x="226.6" y="78.5" width="3.3" height="2.2" fill="#4a3a48" transform="rotate(79 226.6 78.5)"/><rect x="77.7" y="73.4" width="3.5" height="2.4" fill="#e0b8c8" transform="rotate(35 77.7 73.4)"/><rect x="200.3" y="72.1" width="3.4" height="2.3" fill="#5a4a60" transform="rotate(39 200.3 72.1)"/><rect x="88.6" y="101.8" width="3.8" height="2.5" fill="#e0b8c8" transform="rotate(33 88.6 101.8)"/><rect x="100.3" y="92.8" width="2.4" height="1.6" fill="#6a80d0" transform="rotate(16 100.3 92.8)"/><rect x="60.0" y="71.3" width="2.3" height="1.5" fill="#e898a8" transform="rotate(51 60.0 71.3)"/><rect x="97.5" y="81.5" width="2.8" height="1.8" fill="#3a2a30" transform="rotate(22 97.5 81.5)"/><rect x="97.4" y="93.5" width="3.7" height="2.5" fill="#c87aa0" transform="rotate(41 97.4 93.5)"/><rect x="120.3" y="104.9" width="3.5" height="2.3" fill="#6a80d0" transform="rotate(90 120.3 104.9)"/><rect x="216.4" y="96.7" width="4.0" height="2.7" fill="#c87aa0" transform="rotate(41 216.4 96.7)"/><rect x="215.1" y="94.8" width="4.8" height="3.2" fill="#b890c8" transform="rotate(18 215.1 94.8)"/><rect x="183.3" y="88.4" width="2.4" height="1.6" fill="#5a4a60" transform="rotate(78 183.3 88.4)"/><rect x="159.4" y="100.8" width="3.9" height="2.6" fill="#4a3a48" transform="rotate(64 159.4 100.8)"/><rect x="233.6" y="102.9" width="4.4" height="2.9" fill="#c87aa0" transform="rotate(88 233.6 102.9)"/><rect x="186.3" y="76.0" width="3.3" height="2.2" fill="#68b8a0" transform="rotate(49 186.3 76.0)"/><rect x="143.6" y="54.3" width="3.6" height="2.4" fill="#d88ab0" transform="rotate(57 143.6 54.3)"/><rect x="154.9" y="103.2" width="3.6" height="2.4" fill="#58a8b0" transform="rotate(42 154.9 103.2)"/><rect x="95.7" y="92.5" width="3.3" height="2.2" fill="#b890c8" transform="rotate(16 95.7 92.5)"/><rect x="188.1" y="101.4" width="2.8" height="1.9" fill="#c87aa0" transform="rotate(83 188.1 101.4)"/><rect x="82.9" y="66.4" width="4.5" height="3.0" fill="#58a8b0" transform="rotate(43 82.9 66.4)"/><rect x="82.6" y="96.4" width="2.8" height="1.9" fill="#68b8a0" transform="rotate(1 82.6 96.4)"/><rect x="88.7" y="87.4" width="2.5" height="1.7" fill="#c87aa0" transform="rotate(56 88.7 87.4)"/><rect x="195.3" y="79.0" width="2.4" height="1.6" fill="#6a80d0" transform="rotate(63 195.3 79.0)"/><rect x="209.6" y="94.4" width="4.7" height="3.2" fill="#b890c8" transform="rotate(8 209.6 94.4)"/><rect x="106.8" y="57.5" width="4.6" height="3.1" fill="#d88ab0" transform="rotate(28 106.8 57.5)"/><rect x="68.2" y="73.4" width="3.8" height="2.5" fill="#5a4a60" transform="rotate(62 68.2 73.4)"/><rect x="45.1" y="106.3" width="3.6" height="2.4" fill="#6a80d0" transform="rotate(40 45.1 106.3)"/><rect x="214.1" y="92.0" width="3.7" height="2.5" fill="#6a80d0" transform="rotate(55 214.1 92.0)"/><rect x="109.4" y="96.9" width="3.1" height="2.0" fill="#4a3a48" transform="rotate(80 109.4 96.9)"/><rect x="228.6" y="88.2" width="4.0" height="2.7" fill="#6a80d0" transform="rotate(23 228.6 88.2)"/><rect x="190.9" y="61.4" width="3.4" height="2.3" fill="#f0c8d8" transform="rotate(16 190.9 61.4)"/><rect x="88.4" y="66.2" width="3.8" height="2.5" fill="#e0b8c8" transform="rotate(45 88.4 66.2)"/><rect x="180.7" y="99.9" width="3.3" height="2.2" fill="#3a2a30" transform="rotate(18 180.7 99.9)"/><rect x="108.7" y="85.7" width="3.4" height="2.3" fill="#9070b8" transform="rotate(64 108.7 85.7)"/><rect x="55.9" y="100.2" width="4.0" height="2.7" fill="#c87aa0" transform="rotate(58 55.9 100.2)"/><rect x="77.4" y="78.3" width="4.1" height="2.8" fill="#6a80d0" transform="rotate(76 77.4 78.3)"/><rect x="76.3" y="87.2" width="3.3" height="2.2" fill="#e0b8c8" transform="rotate(36 76.3 87.2)"/><rect x="86.2" y="88.4" width="4.0" height="2.6" fill="#d88ab0" transform="rotate(31 86.2 88.4)"/><rect x="154.6" y="99.6" width="3.3" height="2.2" fill="#e898a8" transform="rotate(43 154.6 99.6)"/><rect x="51.4" y="100.4" width="3.8" height="2.5" fill="#3a2a30" transform="rotate(69 51.4 100.4)"/><rect x="168.1" y="76.9" width="2.5" height="1.7" fill="#6a80d0" transform="rotate(46 168.1 76.9)"/><rect x="153.9" y="90.4" width="4.0" height="2.6" fill="#d88ab0" transform="rotate(19 153.9 90.4)"/><rect x="170.9" y="85.3" width="4.7" height="3.2" fill="#6a80d0" transform="rotate(50 170.9 85.3)"/><rect x="42.1" y="107.0" width="3.3" height="2.2" fill="#5a4a60" transform="rotate(83 42.1 107.0)"/><rect x="225.7" y="80.5" width="2.8" height="1.9" fill="#f0c8d8" transform="rotate(47 225.7 80.5)"/><rect x="204.4" y="80.4" width="4.1" height="2.8" fill="#c87aa0" transform="rotate(10 204.4 80.4)"/><rect x="176.1" y="95.2" width="3.9" height="2.6" fill="#9070b8" transform="rotate(60 176.1 95.2)"/><rect x="128.4" y="52.9" width="4.7" height="3.1" fill="#e0b8c8" transform="rotate(3 128.4 52.9)"/><rect x="52.9" y="74.7" width="3.6" height="2.4" fill="#b890c8" transform="rotate(14 52.9 74.7)"/><rect x="169.2" y="80.0" width="3.0" height="2.0" fill="#9070b8" transform="rotate(31 169.2 80.0)"/><rect x="81.8" y="74.8" width="4.8" height="3.2" fill="#d88ab0" transform="rotate(75 81.8 74.8)"/><rect x="126.5" y="98.8" width="4.3" height="2.9" fill="#c87aa0" transform="rotate(64 126.5 98.8)"/><rect x="62.5" y="105.4" width="2.7" height="1.8" fill="#b890c8" transform="rotate(79 62.5 105.4)"/><rect x="158.6" y="99.5" width="3.3" height="2.2" fill="#c87aa0" transform="rotate(1 158.6 99.5)"/><rect x="78.1" y="95.8" width="4.1" height="2.7" fill="#c87aa0" transform="rotate(48 78.1 95.8)"/><rect x="62.9" y="81.2" width="3.3" height="2.2" fill="#d88ab0" transform="rotate(63 62.9 81.2)"/><rect x="93.2" y="105.1" width="4.2" height="2.8" fill="#5a4a60" transform="rotate(5 93.2 105.1)"/><rect x="111.9" y="68.5" width="2.9" height="1.9" fill="#6a80d0" transform="rotate(14 111.9 68.5)"/><rect x="168.0" y="75.1" width="2.8" height="1.8" fill="#68b8a0" transform="rotate(71 168.0 75.1)"/><rect x="228.8" y="83.2" width="4.6" height="3.1" fill="#b890c8" transform="rotate(12 228.8 83.2)"/><rect x="185.3" y="66.2" width="2.5" height="1.6" fill="#e0b8c8" transform="rotate(61 185.3 66.2)"/><rect x="110.8" y="87.7" width="3.4" height="2.3" fill="#e0b8c8" transform="rotate(6 110.8 87.7)"/><rect x="95.3" y="81.2" width="3.6" height="2.4" fill="#58a8b0" transform="rotate(70 95.3 81.2)"/><rect x="97.8" y="97.0" width="2.5" height="1.7" fill="#5a4a60" transform="rotate(47 97.8 97.0)"/><rect x="140.6" y="92.3" width="3.3" height="2.2" fill="#e0b8c8" transform="rotate(13 140.6 92.3)"/><rect x="93.2" y="85.5" width="2.4" height="1.6" fill="#f0c8d8" transform="rotate(23 93.2 85.5)"/><rect x="86.7" y="95.8" width="3.9" height="2.6" fill="#e898a8" transform="rotate(47 86.7 95.8)"/><rect x="172.8" y="56.7" width="4.4" height="2.9" fill="#6a80d0" transform="rotate(42 172.8 56.7)"/><rect x="89.3" y="107.0" width="2.4" height="1.6" fill="#68b8a0" transform="rotate(79 89.3 107.0)"/><rect x="101.4" y="91.5" width="4.6" height="3.1" fill="#f0c8d8" transform="rotate(27 101.4 91.5)"/><rect x="184.8" y="75.0" width="3.8" height="2.6" fill="#5a4a60" transform="rotate(9 184.8 75.0)"/><rect x="173.9" y="59.7" width="3.4" height="2.3" fill="#3a2a30" transform="rotate(55 173.9 59.7)"/><rect x="198.2" y="76.5" width="4.1" height="2.7" fill="#4a3a48" transform="rotate(14 198.2 76.5)"/><rect x="204.6" y="91.2" width="2.6" height="1.7" fill="#4a3a48" transform="rotate(39 204.6 91.2)"/><rect x="175.1" y="87.9" width="4.6" height="3.1" fill="#c87aa0" transform="rotate(27 175.1 87.9)"/><rect x="59.4" y="104.1" width="4.5" height="3.0" fill="#58a8b0" transform="rotate(60 59.4 104.1)"/><rect x="115.6" y="101.3" width="2.8" height="1.8" fill="#e898a8" transform="rotate(89 115.6 101.3)"/><rect x="224.9" y="79.1" width="4.3" height="2.9" fill="#4a3a48" transform="rotate(65 224.9 79.1)"/><rect x="185.9" y="61.2" width="3.1" height="2.1" fill="#f0c8d8" transform="rotate(1 185.9 61.2)"/><rect x="102.7" y="61.0" width="3.2" height="2.1" fill="#e0b8c8" transform="rotate(66 102.7 61.0)"/><rect x="173.6" y="76.9" width="4.4" height="2.9" fill="#f0c8d8" transform="rotate(45 173.6 76.9)"/><rect x="191.9" y="60.1" width="4.8" height="3.2" fill="#4a3a48" transform="rotate(41 191.9 60.1)"/><rect x="49.0" y="78.9" width="2.9" height="1.9" fill="#5a4a60" transform="rotate(52 49.0 78.9)"/><rect x="43.5" y="97.4" width="2.9" height="1.9" fill="#e898a8" transform="rotate(27 43.5 97.4)"/><rect x="147.5" y="105.7" width="3.4" height="2.3" fill="#b890c8" transform="rotate(62 147.5 105.7)"/><rect x="63.5" y="79.0" width="2.6" height="1.8" fill="#68b8a0" transform="rotate(45 63.5 79.0)"/><rect x="194.7" y="64.0" width="4.4" height="3.0" fill="#6a80d0" transform="rotate(78 194.7 64.0)"/><rect x="102.3" y="61.0" width="3.7" height="2.5" fill="#6a80d0" transform="rotate(47 102.3 61.0)"/><rect x="174.7" y="72.0" width="4.1" height="2.7" fill="#3a2a30" transform="rotate(37 174.7 72.0)"/><rect x="157.7" y="97.7" width="2.5" height="1.7" fill="#9070b8" transform="rotate(45 157.7 97.7)"/><rect x="83.2" y="68.1" width="3.7" height="2.5" fill="#9070b8" transform="rotate(33 83.2 68.1)"/><rect x="89.9" y="67.3" width="2.6" height="1.8" fill="#b890c8" transform="rotate(49 89.9 67.3)"/><rect x="63.6" y="99.3" width="3.8" height="2.5" fill="#58a8b0" transform="rotate(69 63.6 99.3)"/><rect x="187.6" y="90.7" width="4.2" height="2.8" fill="#f0c8d8" transform="rotate(33 187.6 90.7)"/><rect x="94.4" y="75.5" width="3.2" height="2.1" fill="#3a2a30" transform="rotate(69 94.4 75.5)"/><rect x="79.0" y="76.9" width="3.1" height="2.1" fill="#e0b8c8" transform="rotate(27 79.0 76.9)"/><rect x="228.2" y="79.8" width="4.1" height="2.7" fill="#f0c8d8" transform="rotate(29 228.2 79.8)"/><rect x="45.8" y="82.2" width="4.6" height="3.1" fill="#f0c8d8" transform="rotate(84 45.8 82.2)"/><rect x="186.0" y="68.6" width="2.5" height="1.7" fill="#d88ab0" transform="rotate(72 186.0 68.6)"/><rect x="107.2" y="71.4" width="2.4" height="1.6" fill="#58a8b0" transform="rotate(85 107.2 71.4)"/><rect x="169.6" y="59.7" width="3.7" height="2.5" fill="#e898a8" transform="rotate(87 169.6 59.7)"/><rect x="234.6" y="105.6" width="3.6" height="2.4" fill="#b890c8" transform="rotate(55 234.6 105.6)"/><rect x="178.1" y="75.0" width="2.7" height="1.8" fill="#68b8a0" transform="rotate(88 178.1 75.0)"/><rect x="100.5" y="90.6" width="4.7" height="3.2" fill="#58a8b0" transform="rotate(19 100.5 90.6)"/><rect x="210.3" y="103.4" width="3.8" height="2.5" fill="#d88ab0" transform="rotate(75 210.3 103.4)"/><rect x="65.6" y="94.3" width="4.7" height="3.1" fill="#58a8b0" transform="rotate(4 65.6 94.3)"/><rect x="93.2" y="106.3" width="2.3" height="1.6" fill="#e898a8" transform="rotate(23 93.2 106.3)"/><rect x="174.6" y="80.6" width="4.2" height="2.8" fill="#f0c8d8" transform="rotate(85 174.6 80.6)"/><rect x="44.3" y="95.7" width="4.4" height="2.9" fill="#e898a8" transform="rotate(52 44.3 95.7)"/><rect x="103.6" y="64.1" width="2.3" height="1.5" fill="#e898a8" transform="rotate(30 103.6 64.1)"/><rect x="85.1" y="84.2" width="4.1" height="2.7" fill="#b890c8" transform="rotate(66 85.1 84.2)"/><rect x="171.7" y="77.0" width="4.6" height="3.1" fill="#6a80d0" transform="rotate(53 171.7 77.0)"/><rect x="83.2" y="78.3" width="4.6" height="3.1" fill="#3a2a30" transform="rotate(23 83.2 78.3)"/><rect x="80.0" y="88.0" width="3.8" height="2.5" fill="#9070b8" transform="rotate(73 80.0 88.0)"/><rect x="83.5" y="100.2" width="3.0" height="2.0" fill="#58a8b0" transform="rotate(8 83.5 100.2)"/><rect x="93.3" y="70.1" width="2.8" height="1.8" fill="#4a3a48" transform="rotate(4 93.3 70.1)"/><rect x="196.0" y="81.7" width="4.0" height="2.7" fill="#c87aa0" transform="rotate(64 196.0 81.7)"/><rect x="81.3" y="64.0" width="3.7" height="2.4" fill="#e898a8" transform="rotate(17 81.3 64.0)"/><rect x="107.9" y="71.6" width="4.8" height="3.2" fill="#c87aa0" transform="rotate(49 107.9 71.6)"/><rect x="170.8" y="64.8" width="2.8" height="1.9" fill="#3a2a30" transform="rotate(36 170.8 64.8)"/><rect x="148.1" y="103.9" width="3.5" height="2.3" fill="#c87aa0" transform="rotate(1 148.1 103.9)"/><rect x="63.6" y="79.1" width="4.6" height="3.1" fill="#6a80d0" transform="rotate(43 63.6 79.1)"/><rect x="198.8" y="69.6" width="2.7" height="1.8" fill="#d88ab0" transform="rotate(17 198.8 69.6)"/><rect x="177.3" y="65.0" width="4.5" height="3.0" fill="#4a3a48" transform="rotate(85 177.3 65.0)"/><rect x="68.8" y="71.1" width="2.6" height="1.7" fill="#d88ab0" transform="rotate(41 68.8 71.1)"/><rect x="149.2" y="93.9" width="2.9" height="1.9" fill="#b890c8" transform="rotate(11 149.2 93.9)"/><rect x="189.7" y="102.8" width="2.7" height="1.8" fill="#b890c8" transform="rotate(42 189.7 102.8)"/><rect x="164.0" y="57.8" width="4.3" height="2.8" fill="#68b8a0" transform="rotate(76 164.0 57.8)"/><rect x="207.7" y="77.6" width="2.6" height="1.8" fill="#6a80d0" transform="rotate(60 207.7 77.6)"/><rect x="190.2" y="74.0" width="3.0" height="2.0" fill="#d88ab0" transform="rotate(5 190.2 74.0)"/><rect x="66.3" y="92.5" width="4.7" height="3.1" fill="#6a80d0" transform="rotate(3 66.3 92.5)"/><rect x="76.1" y="96.0" width="3.8" height="2.5" fill="#68b8a0" transform="rotate(8 76.1 96.0)"/><rect x="96.6" y="71.6" width="3.7" height="2.5" fill="#f0c8d8" transform="rotate(53 96.6 71.6)"/><rect x="83.8" y="104.2" width="2.8" height="1.9" fill="#68b8a0" transform="rotate(79 83.8 104.2)"/><rect x="209.1" y="100.5" width="3.4" height="2.3" fill="#58a8b0" transform="rotate(71 209.1 100.5)"/><rect x="65.9" y="91.8" width="3.7" height="2.4" fill="#6a80d0" transform="rotate(51 65.9 91.8)"/><rect x="63.1" y="104.1" width="3.9" height="2.6" fill="#9070b8" transform="rotate(81 63.1 104.1)"/><rect x="174.3" y="71.1" width="2.5" height="1.7" fill="#b890c8" transform="rotate(65 174.3 71.1)"/><rect x="166.6" y="89.7" width="3.5" height="2.3" fill="#5a4a60" transform="rotate(34 166.6 89.7)"/><rect x="134.5" y="98.6" width="3.4" height="2.3" fill="#f0c8d8" transform="rotate(11 134.5 98.6)"/><rect x="97.1" y="87.2" width="3.9" height="2.6" fill="#d88ab0" transform="rotate(3 97.1 87.2)"/><rect x="88.8" y="76.4" width="3.0" height="2.0" fill="#c87aa0" transform="rotate(6 88.8 76.4)"/><rect x="79.2" y="97.6" width="2.4" height="1.6" fill="#3a2a30" transform="rotate(24 79.2 97.6)"/><rect x="219.6" y="79.7" width="3.2" height="2.1" fill="#e898a8" transform="rotate(7 219.6 79.7)"/><rect x="206.6" y="79.7" width="4.6" height="3.1" fill="#e0b8c8" transform="rotate(82 206.6 79.7)"/><rect x="75.2" y="97.9" width="3.0" height="2.0" fill="#3a2a30" transform="rotate(85 75.2 97.9)"/><rect x="222.6" y="89.7" width="4.1" height="2.7" fill="#3a2a30" transform="rotate(35 222.6 89.7)"/><rect x="200.0" y="96.1" width="2.5" height="1.7" fill="#58a8b0" transform="rotate(60 200.0 96.1)"/><rect x="93.7" y="65.4" width="2.3" height="1.5" fill="#3a2a30" transform="rotate(65 93.7 65.4)"/><rect x="168.2" y="77.9" width="3.8" height="2.5" fill="#5a4a60" transform="rotate(51 168.2 77.9)"/><rect x="225.8" y="87.4" width="4.7" height="3.2" fill="#c87aa0" transform="rotate(20 225.8 87.4)"/><rect x="53.0" y="106.0" width="3.0" height="2.0" fill="#e898a8" transform="rotate(23 53.0 106.0)"/><rect x="158.2" y="94.6" width="4.8" height="3.2" fill="#9070b8" transform="rotate(79 158.2 94.6)"/><rect x="166.3" y="93.2" width="2.4" height="1.6" fill="#5a4a60" transform="rotate(52 166.3 93.2)"/><rect x="191.4" y="95.2" width="3.7" height="2.5" fill="#d88ab0" transform="rotate(63 191.4 95.2)"/><rect x="110.7" y="71.4" width="4.5" height="3.0" fill="#d88ab0" transform="rotate(63 110.7 71.4)"/><rect x="197.1" y="64.6" width="3.8" height="2.6" fill="#5a4a60" transform="rotate(15 197.1 64.6)"/><rect x="175.8" y="80.4" width="3.4" height="2.3" fill="#e0b8c8" transform="rotate(88 175.8 80.4)"/><rect x="69.3" y="87.6" width="4.2" height="2.8" fill="#5a4a60" transform="rotate(13 69.3 87.6)"/><rect x="99.4" y="103.0" width="3.0" height="2.0" fill="#d88ab0" transform="rotate(74 99.4 103.0)"/><rect x="160.1" y="104.9" width="2.4" height="1.6" fill="#3a2a30" transform="rotate(13 160.1 104.9)"/><rect x="88.7" y="80.7" width="2.4" height="1.6" fill="#68b8a0" transform="rotate(12 88.7 80.7)"/><rect x="211.1" y="81.5" width="4.2" height="2.8" fill="#68b8a0" transform="rotate(67 211.1 81.5)"/><rect x="82.5" y="63.0" width="3.2" height="2.1" fill="#f0c8d8" transform="rotate(55 82.5 63.0)"/><rect x="98.8" y="55.8" width="4.7" height="3.1" fill="#d88ab0" transform="rotate(37 98.8 55.8)"/><rect x="140.7" y="104.2" width="3.6" height="2.4" fill="#5a4a60" transform="rotate(27 140.7 104.2)"/><rect x="129.5" y="104.7" width="3.3" height="2.2" fill="#c87aa0" transform="rotate(60 129.5 104.7)"/><rect x="174.0" y="93.9" width="4.3" height="2.9" fill="#b890c8" transform="rotate(64 174.0 93.9)"/><rect x="143.7" y="106.9" width="2.5" height="1.6" fill="#b890c8" transform="rotate(23 143.7 106.9)"/><rect x="61.6" y="82.3" width="4.3" height="2.8" fill="#9070b8" transform="rotate(74 61.6 82.3)"/><rect x="182.6" y="69.6" width="4.3" height="2.9" fill="#3a2a30" transform="rotate(5 182.6 69.6)"/><rect x="178.3" y="77.1" width="4.7" height="3.2" fill="#e898a8" transform="rotate(60 178.3 77.1)"/><rect x="70.7" y="65.9" width="3.7" height="2.4" fill="#d88ab0" transform="rotate(0 70.7 65.9)"/><rect x="86.6" y="90.2" width="4.5" height="3.0" fill="#68b8a0" transform="rotate(54 86.6 90.2)"/><rect x="134.6" y="95.2" width="3.3" height="2.2" fill="#6a80d0" transform="rotate(83 134.6 95.2)"/><rect x="80.4" y="99.5" width="2.4" height="1.6" fill="#e898a8" transform="rotate(90 80.4 99.5)"/><rect x="110.5" y="92.9" width="3.4" height="2.3" fill="#4a3a48" transform="rotate(13 110.5 92.9)"/><rect x="73.7" y="65.5" width="3.5" height="2.3" fill="#4a3a48" transform="rotate(75 73.7 65.5)"/><rect x="213.5" y="102.9" width="2.6" height="1.7" fill="#5a4a60" transform="rotate(38 213.5 102.9)"/><rect x="34.6" y="97.9" width="3.5" height="2.4" fill="#4a3a48" transform="rotate(52 34.6 97.9)"/><rect x="185.2" y="99.8" width="2.9" height="1.9" fill="#6a80d0" transform="rotate(11 185.2 99.8)"/><rect x="178.7" y="76.7" width="3.9" height="2.6" fill="#e0b8c8" transform="rotate(26 178.7 76.7)"/><rect x="93.8" y="94.5" width="4.1" height="2.7" fill="#68b8a0" transform="rotate(80 93.8 94.5)"/><rect x="214.7" y="77.0" width="4.0" height="2.7" fill="#e898a8" transform="rotate(64 214.7 77.0)"/><rect x="235.0" y="95.2" width="4.5" height="3.0" fill="#e898a8" transform="rotate(9 235.0 95.2)"/><rect x="185.6" y="68.3" width="3.8" height="2.5" fill="#4a3a48" transform="rotate(76 185.6 68.3)"/><rect x="167.7" y="88.8" width="2.8" height="1.9" fill="#e898a8" transform="rotate(38 167.7 88.8)"/><rect x="77.5" y="94.4" width="3.7" height="2.5" fill="#b890c8" transform="rotate(43 77.5 94.4)"/><rect x="206.4" y="70.9" width="2.9" height="1.9" fill="#e898a8" transform="rotate(78 206.4 70.9)"/><rect x="109.8" y="99.5" width="4.8" height="3.2" fill="#9070b8" transform="rotate(25 109.8 99.5)"/><rect x="187.0" y="75.8" width="3.7" height="2.5" fill="#68b8a0" transform="rotate(27 187.0 75.8)"/><rect x="205.8" y="73.5" width="4.7" height="3.2" fill="#f0c8d8" transform="rotate(43 205.8 73.5)"/><rect x="186.8" y="83.8" width="2.9" height="1.9" fill="#9070b8" transform="rotate(87 186.8 83.8)"/><rect x="193.9" y="69.9" width="3.5" height="2.4" fill="#4a3a48" transform="rotate(2 193.9 69.9)"/><rect x="87.6" y="83.2" width="4.7" height="3.1" fill="#b890c8" transform="rotate(41 87.6 83.2)"/><rect x="65.1" y="86.4" width="3.9" height="2.6" fill="#68b8a0" transform="rotate(37 65.1 86.4)"/><rect x="220.3" y="105.2" width="2.6" height="1.7" fill="#5a4a60" transform="rotate(77 220.3 105.2)"/><rect x="120.8" y="54.9" width="3.0" height="2.0" fill="#d88ab0" transform="rotate(88 120.8 54.9)"/><rect x="65.3" y="72.0" width="3.2" height="2.1" fill="#6a80d0" transform="rotate(35 65.3 72.0)"/><rect x="60.8" y="83.8" width="2.3" height="1.5" fill="#b890c8" transform="rotate(47 60.8 83.8)"/><rect x="195.5" y="86.5" width="2.9" height="1.9" fill="#f0c8d8" transform="rotate(22 195.5 86.5)"/><rect x="35.3" y="102.1" width="4.3" height="2.8" fill="#5a4a60" transform="rotate(24 35.3 102.1)"/><rect x="85.5" y="78.9" width="3.7" height="2.5" fill="#4a3a48" transform="rotate(85 85.5 78.9)"/><rect x="202.0" y="99.3" width="3.8" height="2.6" fill="#6a80d0" transform="rotate(46 202.0 99.3)"/><rect x="176.9" y="70.5" width="4.4" height="2.9" fill="#6a80d0" transform="rotate(89 176.9 70.5)"/><rect x="95.9" y="76.3" width="4.3" height="2.8" fill="#3a2a30" transform="rotate(36 95.9 76.3)"/><rect x="158.0" y="106.3" width="3.6" height="2.4" fill="#6a80d0" transform="rotate(77 158.0 106.3)"/><rect x="203.8" y="102.3" width="4.2" height="2.8" fill="#5a4a60" transform="rotate(60 203.8 102.3)"/><rect x="104.6" y="90.9" width="4.2" height="2.8" fill="#6a80d0" transform="rotate(40 104.6 90.9)"/><rect x="106.5" y="64.6" width="4.0" height="2.6" fill="#4a3a48" transform="rotate(89 106.5 64.6)"/><rect x="186.6" y="94.2" width="3.6" height="2.4" fill="#5a4a60" transform="rotate(74 186.6 94.2)"/><rect x="154.6" y="93.9" width="3.8" height="2.5" fill="#68b8a0" transform="rotate(49 154.6 93.9)"/><rect x="67.0" y="67.0" width="2.6" height="1.8" fill="#5a4a60" transform="rotate(86 67.0 67.0)"/><rect x="97.7" y="77.7" width="2.8" height="1.9" fill="#9070b8" transform="rotate(2 97.7 77.7)"/><rect x="104.7" y="71.8" width="4.6" height="3.1" fill="#6a80d0" transform="rotate(38 104.7 71.8)"/><rect x="95.2" y="84.6" width="2.7" height="1.8" fill="#9070b8" transform="rotate(20 95.2 84.6)"/><rect x="207.7" y="77.8" width="2.7" height="1.8" fill="#b890c8" transform="rotate(69 207.7 77.8)"/><rect x="216.3" y="93.5" width="4.3" height="2.9" fill="#f0c8d8" transform="rotate(56 216.3 93.5)"/><rect x="175.4" y="79.5" width="4.3" height="2.9" fill="#e898a8" transform="rotate(46 175.4 79.5)"/><rect x="195.6" y="101.1" width="3.0" height="2.0" fill="#6a80d0" transform="rotate(37 195.6 101.1)"/><rect x="197.2" y="86.1" width="3.6" height="2.4" fill="#9070b8" transform="rotate(47 197.2 86.1)"/><rect x="212.4" y="98.0" width="3.4" height="2.3" fill="#5a4a60" transform="rotate(47 212.4 98.0)"/><rect x="186.4" y="77.0" width="3.5" height="2.4" fill="#e898a8" transform="rotate(29 186.4 77.0)"/><rect x="214.9" y="106.5" width="2.4" height="1.6" fill="#6a80d0" transform="rotate(31 214.9 106.5)"/><rect x="104.9" y="104.5" width="4.8" height="3.2" fill="#b890c8" transform="rotate(1 104.9 104.5)"/><rect x="212.0" y="95.9" width="3.9" height="2.6" fill="#4a3a48" transform="rotate(14 212.0 95.9)"/><rect x="124.0" y="106.4" width="3.8" height="2.5" fill="#e898a8" transform="rotate(69 124.0 106.4)"/><rect x="66.4" y="77.5" width="4.0" height="2.6" fill="#6a80d0" transform="rotate(27 66.4 77.5)"/><rect x="226.5" y="87.9" width="3.1" height="2.1" fill="#3a2a30" transform="rotate(73 226.5 87.9)"/><rect x="223.6" y="85.8" width="2.8" height="1.9" fill="#d88ab0" transform="rotate(84 223.6 85.8)"/><rect x="224.2" y="85.2" width="4.2" height="2.8" fill="#6a80d0" transform="rotate(42 224.2 85.2)"/><rect x="67.2" y="101.0" width="2.5" height="1.7" fill="#b890c8" transform="rotate(81 67.2 101.0)"/><rect x="197.3" y="64.3" width="2.4" height="1.6" fill="#58a8b0" transform="rotate(4 197.3 64.3)"/><rect x="182.5" y="91.4" width="2.8" height="1.8" fill="#3a2a30" transform="rotate(3 182.5 91.4)"/><rect x="185.4" y="100.8" width="4.7" height="3.1" fill="#5a4a60" transform="rotate(41 185.4 100.8)"/><rect x="199.1" y="101.6" width="2.7" height="1.8" fill="#4a3a48" transform="rotate(81 199.1 101.6)"/><rect x="173.7" y="99.6" width="3.2" height="2.2" fill="#9070b8" transform="rotate(84 173.7 99.6)"/><rect x="83.0" y="91.3" width="3.3" height="2.2" fill="#58a8b0" transform="rotate(83 83.0 91.3)"/><rect x="88.6" y="102.5" width="2.5" height="1.6" fill="#5a4a60" transform="rotate(32 88.6 102.5)"/><rect x="69.2" y="65.0" width="4.6" height="3.1" fill="#9070b8" transform="rotate(85 69.2 65.0)"/><rect x="177.1" y="105.9" width="3.9" height="2.6" fill="#5a4a60" transform="rotate(88 177.1 105.9)"/><rect x="110.5" y="91.5" width="2.3" height="1.5" fill="#68b8a0" transform="rotate(52 110.5 91.5)"/><rect x="141.5" y="54.7" width="3.2" height="2.1" fill="#d88ab0" transform="rotate(77 141.5 54.7)"/><rect x="108.0" y="70.2" width="4.7" height="3.1" fill="#58a8b0" transform="rotate(82 108.0 70.2)"/><rect x="190.8" y="83.1" width="3.4" height="2.3" fill="#6a80d0" transform="rotate(62 190.8 83.1)"/><rect x="69.8" y="77.7" width="3.8" height="2.6" fill="#e898a8" transform="rotate(20 69.8 77.7)"/><rect x="189.8" y="91.7" width="3.1" height="2.1" fill="#d88ab0" transform="rotate(8 189.8 91.7)"/><rect x="214.2" y="73.0" width="4.1" height="2.7" fill="#c87aa0" transform="rotate(17 214.2 73.0)"/><rect x="207.7" y="85.1" width="2.3" height="1.6" fill="#3a2a30" transform="rotate(14 207.7 85.1)"/><rect x="78.3" y="61.9" width="2.5" height="1.7" fill="#68b8a0" transform="rotate(25 78.3 61.9)"/><rect x="45.5" y="80.7" width="2.7" height="1.8" fill="#c87aa0" transform="rotate(68 45.5 80.7)"/><rect x="196.2" y="74.5" width="3.7" height="2.5" fill="#e898a8" transform="rotate(65 196.2 74.5)"/><rect x="94.6" y="106.3" width="2.7" height="1.8" fill="#d88ab0" transform="rotate(42 94.6 106.3)"/><rect x="195.6" y="98.8" width="3.6" height="2.4" fill="#9070b8" transform="rotate(85 195.6 98.8)"/><rect x="57.7" y="73.1" width="4.5" height="3.0" fill="#4a3a48" transform="rotate(90 57.7 73.1)"/><rect x="52.6" y="87.9" width="3.0" height="2.0" fill="#9070b8" transform="rotate(37 52.6 87.9)"/><rect x="81.3" y="106.8" width="4.0" height="2.7" fill="#c87aa0" transform="rotate(82 81.3 106.8)"/><rect x="69.0" y="73.6" width="4.2" height="2.8" fill="#e0b8c8" transform="rotate(14 69.0 73.6)"/><rect x="151.2" y="100.4" width="4.8" height="3.2" fill="#9070b8" transform="rotate(61 151.2 100.4)"/><rect x="167.7" y="104.8" width="2.9" height="1.9" fill="#58a8b0" transform="rotate(63 167.7 104.8)"/><rect x="97.8" y="85.4" width="2.9" height="2.0" fill="#6a80d0" transform="rotate(85 97.8 85.4)"/><rect x="210.0" y="106.3" width="2.7" height="1.8" fill="#9070b8" transform="rotate(64 210.0 106.3)"/><rect x="175.7" y="62.4" width="2.8" height="1.8" fill="#9070b8" transform="rotate(71 175.7 62.4)"/><rect x="157.6" y="92.3" width="2.3" height="1.5" fill="#c87aa0" transform="rotate(0 157.6 92.3)"/><rect x="223.1" y="96.1" width="4.1" height="2.7" fill="#58a8b0" transform="rotate(60 223.1 96.1)"/><rect x="96.7" y="73.9" width="4.1" height="2.7" fill="#e0b8c8" transform="rotate(59 96.7 73.9)"/><rect x="222.1" y="88.0" width="2.6" height="1.7" fill="#6a80d0" transform="rotate(76 222.1 88.0)"/><rect x="183.4" y="83.5" width="3.2" height="2.1" fill="#5a4a60" transform="rotate(82 183.4 83.5)"/><rect x="203.1" y="89.6" width="3.4" height="2.3" fill="#b890c8" transform="rotate(47 203.1 89.6)"/><rect x="166.1" y="78.2" width="2.3" height="1.6" fill="#c87aa0" transform="rotate(20 166.1 78.2)"/><rect x="103.1" y="57.1" width="4.4" height="2.9" fill="#4a3a48" transform="rotate(44 103.1 57.1)"/><rect x="166.4" y="72.4" width="3.7" height="2.4" fill="#e898a8" transform="rotate(74 166.4 72.4)"/><rect x="122.7" y="98.9" width="3.8" height="2.5" fill="#68b8a0" transform="rotate(65 122.7 98.9)"/><rect x="106.7" y="57.3" width="4.1" height="2.7" fill="#3a2a30" transform="rotate(9 106.7 57.3)"/><rect x="198.8" y="73.7" width="3.5" height="2.3" fill="#5a4a60" transform="rotate(50 198.8 73.7)"/><rect x="173.3" y="99.0" width="4.8" height="3.2" fill="#c87aa0" transform="rotate(5 173.3 99.0)"/><rect x="177.3" y="81.3" width="4.7" height="3.1" fill="#5a4a60" transform="rotate(56 177.3 81.3)"/><rect x="61.3" y="75.3" width="2.8" height="1.9" fill="#f0c8d8" transform="rotate(18 61.3 75.3)"/><rect x="107.3" y="100.9" width="4.1" height="2.7" fill="#6a80d0" transform="rotate(0 107.3 100.9)"/><rect x="216.0" y="78.6" width="2.7" height="1.8" fill="#58a8b0" transform="rotate(14 216.0 78.6)"/><rect x="217.0" y="93.2" width="3.7" height="2.5" fill="#c87aa0" transform="rotate(19 217.0 93.2)"/><rect x="74.9" y="76.5" width="4.8" height="3.2" fill="#f0c8d8" transform="rotate(36 74.9 76.5)"/><rect x="60.2" y="94.9" width="3.7" height="2.4" fill="#c87aa0" transform="rotate(83 60.2 94.9)"/><rect x="99.8" y="74.1" width="4.2" height="2.8" fill="#3a2a30" transform="rotate(5 99.8 74.1)"/><rect x="117.8" y="94.6" width="3.3" height="2.2" fill="#c87aa0" transform="rotate(20 117.8 94.6)"/><rect x="229.2" y="86.0" width="2.4" height="1.6" fill="#e0b8c8" transform="rotate(53 229.2 86.0)"/><rect x="219.7" y="95.7" width="4.3" height="2.9" fill="#d88ab0" transform="rotate(30 219.7 95.7)"/><rect x="59.4" y="82.0" width="4.5" height="3.0" fill="#b890c8" transform="rotate(31 59.4 82.0)"/><rect x="66.0" y="80.4" width="3.8" height="2.5" fill="#58a8b0" transform="rotate(33 66.0 80.4)"/><rect x="189.5" y="70.5" width="4.5" height="3.0" fill="#e898a8" transform="rotate(28 189.5 70.5)"/><rect x="203.5" y="79.3" width="3.5" height="2.3" fill="#5a4a60" transform="rotate(25 203.5 79.3)"/><rect x="107.5" y="61.7" width="3.8" height="2.5" fill="#f0c8d8" transform="rotate(16 107.5 61.7)"/><rect x="48.9" y="79.8" width="3.8" height="2.5" fill="#b890c8" transform="rotate(77 48.9 79.8)"/><rect x="196.6" y="95.0" width="3.3" height="2.2" fill="#e898a8" transform="rotate(82 196.6 95.0)"/><rect x="235.7" y="102.1" width="3.2" height="2.1" fill="#3a2a30" transform="rotate(82 235.7 102.1)"/><rect x="82.6" y="77.6" width="4.4" height="2.9" fill="#b890c8" transform="rotate(88 82.6 77.6)"/><rect x="172.0" y="98.4" width="4.0" height="2.7" fill="#e898a8" transform="rotate(5 172.0 98.4)"/><rect x="82.8" y="69.3" width="4.7" height="3.1" fill="#c87aa0" transform="rotate(22 82.8 69.3)"/><rect x="109.4" y="58.4" width="4.7" height="3.2" fill="#58a8b0" transform="rotate(67 109.4 58.4)"/><rect x="83.5" y="93.8" width="2.5" height="1.7" fill="#6a80d0" transform="rotate(8 83.5 93.8)"/><rect x="104.1" y="78.0" width="4.3" height="2.9" fill="#6a80d0" transform="rotate(54 104.1 78.0)"/><rect x="199.3" y="68.8" width="2.3" height="1.6" fill="#68b8a0" transform="rotate(81 199.3 68.8)"/><rect x="149.6" y="94.8" width="2.7" height="1.8" fill="#68b8a0" transform="rotate(15 149.6 94.8)"/><rect x="118.1" y="56.6" width="3.8" height="2.5" fill="#4a3a48" transform="rotate(1 118.1 56.6)"/><rect x="80.9" y="77.7" width="3.1" height="2.0" fill="#68b8a0" transform="rotate(4 80.9 77.7)"/><rect x="160.6" y="93.6" width="3.7" height="2.5" fill="#5a4a60" transform="rotate(16 160.6 93.6)"/><rect x="101.8" y="86.6" width="3.7" height="2.4" fill="#58a8b0" transform="rotate(12 101.8 86.6)"/><rect x="96.6" y="68.3" width="4.7" height="3.1" fill="#9070b8" transform="rotate(58 96.6 68.3)"/><rect x="165.6" y="78.0" width="3.0" height="2.0" fill="#3a2a30" transform="rotate(15 165.6 78.0)"/><rect x="63.2" y="81.2" width="4.3" height="2.9" fill="#e898a8" transform="rotate(88 63.2 81.2)"/><rect x="157.7" y="97.2" width="4.4" height="2.9" fill="#3a2a30" transform="rotate(11 157.7 97.2)"/><rect x="201.8" y="93.0" width="4.7" height="3.1" fill="#58a8b0" transform="rotate(39 201.8 93.0)"/><rect x="65.5" y="83.6" width="4.2" height="2.8" fill="#5a4a60" transform="rotate(42 65.5 83.6)"/><rect x="109.4" y="101.8" width="2.4" height="1.6" fill="#6a80d0" transform="rotate(34 109.4 101.8)"/><rect x="166.1" y="88.7" width="4.0" height="2.6" fill="#3a2a30" transform="rotate(52 166.1 88.7)"/><rect x="99.0" y="88.0" width="3.4" height="2.3" fill="#e898a8" transform="rotate(32 99.0 88.0)"/><rect x="132.8" y="104.9" width="4.4" height="2.9" fill="#6a80d0" transform="rotate(48 132.8 104.9)"/><rect x="168.7" y="76.2" width="4.2" height="2.8" fill="#4a3a48" transform="rotate(63 168.7 76.2)"/><rect x="78.6" y="101.5" width="3.5" height="2.3" fill="#d88ab0" transform="rotate(16 78.6 101.5)"/><rect x="89.8" y="98.6" width="4.2" height="2.8" fill="#b890c8" transform="rotate(55 89.8 98.6)"/><rect x="193.2" y="95.7" width="4.0" height="2.7" fill="#b890c8" transform="rotate(41 193.2 95.7)"/><rect x="234.1" y="90.4" width="2.4" height="1.6" fill="#58a8b0" transform="rotate(49 234.1 90.4)"/><rect x="148.1" y="103.1" width="2.5" height="1.6" fill="#b890c8" transform="rotate(54 148.1 103.1)"/><rect x="170.4" y="64.3" width="2.3" height="1.6" fill="#e0b8c8" transform="rotate(40 170.4 64.3)"/><rect x="174.2" y="86.0" width="2.7" height="1.8" fill="#e0b8c8" transform="rotate(13 174.2 86.0)"/><rect x="101.7" y="76.4" width="2.8" height="1.9" fill="#3a2a30" transform="rotate(10 101.7 76.4)"/><rect x="72.0" y="72.8" width="4.2" height="2.8" fill="#68b8a0" transform="rotate(38 72.0 72.8)"/><rect x="233.4" y="103.4" width="4.6" height="3.1" fill="#c87aa0" transform="rotate(76 233.4 103.4)"/><rect x="102.1" y="81.2" width="2.7" height="1.8" fill="#c87aa0" transform="rotate(42 102.1 81.2)"/><rect x="72.1" y="96.3" width="3.4" height="2.3" fill="#c87aa0" transform="rotate(56 72.1 96.3)"/><rect x="45.8" y="84.3" width="2.8" height="1.8" fill="#e0b8c8" transform="rotate(53 45.8 84.3)"/><rect x="211.7" y="80.0" width="3.0" height="2.0" fill="#d88ab0" transform="rotate(37 211.7 80.0)"/><rect x="199.4" y="73.9" width="3.8" height="2.5" fill="#c87aa0" transform="rotate(53 199.4 73.9)"/><rect x="183.6" y="70.7" width="3.5" height="2.3" fill="#6a80d0" transform="rotate(6 183.6 70.7)"/><rect x="94.5" y="66.9" width="3.3" height="2.2" fill="#9070b8" transform="rotate(72 94.5 66.9)"/><rect x="125.8" y="54.5" width="3.5" height="2.3" fill="#f0c8d8" transform="rotate(48 125.8 54.5)"/><rect x="49.5" y="86.2" width="3.0" height="2.0" fill="#d88ab0" transform="rotate(38 49.5 86.2)"/><rect x="198.8" y="84.7" width="4.5" height="3.0" fill="#4a3a48" transform="rotate(46 198.8 84.7)"/><rect x="64.1" y="75.1" width="4.3" height="2.8" fill="#e898a8" transform="rotate(71 64.1 75.1)"/><rect x="167.3" y="57.3" width="4.2" height="2.8" fill="#e898a8" transform="rotate(64 167.3 57.3)"/><rect x="112.0" y="105.3" width="4.5" height="3.0" fill="#4a3a48" transform="rotate(18 112.0 105.3)"/><rect x="171.5" y="77.4" width="4.5" height="3.0" fill="#b890c8" transform="rotate(67 171.5 77.4)"/><rect x="138.3" y="106.4" width="4.4" height="2.9" fill="#d88ab0" transform="rotate(78 138.3 106.4)"/><rect x="216.6" y="85.0" width="3.2" height="2.1" fill="#58a8b0" transform="rotate(74 216.6 85.0)"/><rect x="64.6" y="83.0" width="4.5" height="3.0" fill="#58a8b0" transform="rotate(62 64.6 83.0)"/><rect x="53.6" y="86.9" width="2.3" height="1.5" fill="#e898a8" transform="rotate(28 53.6 86.9)"/><rect x="217.8" y="72.8" width="4.2" height="2.8" fill="#4a3a48" transform="rotate(35 217.8 72.8)"/><rect x="126.9" y="103.2" width="4.6" height="3.1" fill="#f0c8d8" transform="rotate(67 126.9 103.2)"/><rect x="82.2" y="61.4" width="4.5" height="3.0" fill="#f0c8d8" transform="rotate(59 82.2 61.4)"/><rect x="56.1" y="76.5" width="3.7" height="2.4" fill="#9070b8" transform="rotate(64 56.1 76.5)"/><rect x="227.4" y="103.2" width="2.8" height="1.9" fill="#b890c8" transform="rotate(31 227.4 103.2)"/><rect x="71.6" y="102.2" width="3.8" height="2.5" fill="#68b8a0" transform="rotate(44 71.6 102.2)"/><rect x="167.9" y="68.2" width="2.3" height="1.5" fill="#5a4a60" transform="rotate(11 167.9 68.2)"/><rect x="225.8" y="106.5" width="3.9" height="2.6" fill="#d88ab0" transform="rotate(12 225.8 106.5)"/><rect x="80.9" y="95.3" width="3.6" height="2.4" fill="#9070b8" transform="rotate(56 80.9 95.3)"/><rect x="233.0" y="105.4" width="3.7" height="2.5" fill="#4a3a48" transform="rotate(16 233.0 105.4)"/><rect x="186.8" y="94.2" width="4.2" height="2.8" fill="#b890c8" transform="rotate(67 186.8 94.2)"/><rect x="156.5" y="90.5" width="3.9" height="2.6" fill="#4a3a48" transform="rotate(18 156.5 90.5)"/><rect x="84.0" y="104.3" width="2.8" height="1.9" fill="#58a8b0" transform="rotate(14 84.0 104.3)"/><rect x="229.5" y="102.9" width="4.4" height="2.9" fill="#e898a8" transform="rotate(42 229.5 102.9)"/><rect x="149.0" y="56.1" width="4.6" height="3.1" fill="#4a3a48" transform="rotate(7 149.0 56.1)"/><rect x="183.4" y="78.8" width="4.8" height="3.2" fill="#f0c8d8" transform="rotate(57 183.4 78.8)"/><rect x="96.6" y="75.9" width="3.9" height="2.6" fill="#d88ab0" transform="rotate(8 96.6 75.9)"/><rect x="189.9" y="72.8" width="4.3" height="2.9" fill="#4a3a48" transform="rotate(59 189.9 72.8)"/><rect x="122.9" y="97.2" width="2.5" height="1.7" fill="#4a3a48" transform="rotate(0 122.9 97.2)"/><rect x="237.3" y="102.6" width="2.6" height="1.7" fill="#6a80d0" transform="rotate(53 237.3 102.6)"/><rect x="202.2" y="84.5" width="4.0" height="2.7" fill="#58a8b0" transform="rotate(2 202.2 84.5)"/><rect x="170.7" y="90.8" width="4.1" height="2.7" fill="#58a8b0" transform="rotate(78 170.7 90.8)"/><rect x="237.7" y="98.7" width="4.6" height="3.0" fill="#b890c8" transform="rotate(85 237.7 98.7)"/><rect x="45.5" y="102.7" width="3.4" height="2.3" fill="#68b8a0" transform="rotate(1 45.5 102.7)"/><rect x="65.7" y="98.0" width="3.2" height="2.1" fill="#e0b8c8" transform="rotate(0 65.7 98.0)"/><rect x="165.4" y="69.8" width="4.8" height="3.2" fill="#68b8a0" transform="rotate(75 165.4 69.8)"/><rect x="219.0" y="86.9" width="2.3" height="1.5" fill="#4a3a48" transform="rotate(41 219.0 86.9)"/><rect x="43.6" y="100.2" width="3.0" height="2.0" fill="#f0c8d8" transform="rotate(50 43.6 100.2)"/><rect x="173.6" y="83.7" width="2.8" height="1.9" fill="#9070b8" transform="rotate(1 173.6 83.7)"/><rect x="174.5" y="70.6" width="3.8" height="2.5" fill="#b890c8" transform="rotate(89 174.5 70.6)"/><rect x="142.3" y="55.6" width="4.5" height="3.0" fill="#e0b8c8" transform="rotate(89 142.3 55.6)"/><rect x="95.2" y="72.8" width="2.6" height="1.7" fill="#e0b8c8" transform="rotate(12 95.2 72.8)"/><rect x="206.4" y="106.4" width="3.8" height="2.5" fill="#3a2a30" transform="rotate(72 206.4 106.4)"/><rect x="52.8" y="76.1" width="2.6" height="1.7" fill="#68b8a0" transform="rotate(40 52.8 76.1)"/><rect x="44.7" y="88.8" width="2.5" height="1.7" fill="#9070b8" transform="rotate(21 44.7 88.8)"/><rect x="93.5" y="85.4" width="4.4" height="2.9" fill="#e0b8c8" transform="rotate(71 93.5 85.4)"/><rect x="238.1" y="100.9" width="2.9" height="1.9" fill="#4a3a48" transform="rotate(45 238.1 100.9)"/><rect x="48.9" y="84.0" width="3.5" height="2.3" fill="#c87aa0" transform="rotate(65 48.9 84.0)"/><rect x="180.6" y="81.0" width="4.4" height="2.9" fill="#d88ab0" transform="rotate(16 180.6 81.0)"/><rect x="42.8" y="100.8" width="3.5" height="2.3" fill="#4a3a48" transform="rotate(57 42.8 100.8)"/><rect x="86.4" y="87.7" width="4.6" height="3.1" fill="#d88ab0" transform="rotate(86 86.4 87.7)"/><rect x="67.0" y="74.8" width="4.2" height="2.8" fill="#4a3a48" transform="rotate(74 67.0 74.8)"/><rect x="56.5" y="80.4" width="4.5" height="3.0" fill="#9070b8" transform="rotate(88 56.5 80.4)"/><rect x="216.7" y="71.2" width="3.3" height="2.2" fill="#3a2a30" transform="rotate(26 216.7 71.2)"/><rect x="232.3" y="93.3" width="3.8" height="2.5" fill="#3a2a30" transform="rotate(7 232.3 93.3)"/><rect x="129.2" y="101.8" width="3.8" height="2.5" fill="#4a3a48" transform="rotate(79 129.2 101.8)"/><rect x="111.8" y="106.8" width="2.8" height="1.9" fill="#9070b8" transform="rotate(28 111.8 106.8)"/><rect x="33.8" y="98.6" width="3.5" height="2.3" fill="#58a8b0" transform="rotate(53 33.8 98.6)"/><rect x="69.6" y="75.7" width="2.3" height="1.6" fill="#68b8a0" transform="rotate(77 69.6 75.7)"/><rect x="97.7" y="98.8" width="4.1" height="2.7" fill="#3a2a30" transform="rotate(31 97.7 98.8)"/><rect x="92.0" y="79.7" width="4.6" height="3.1" fill="#68b8a0" transform="rotate(27 92.0 79.7)"/><rect x="143.6" y="54.8" width="4.4" height="2.9" fill="#e0b8c8" transform="rotate(27 143.6 54.8)"/><rect x="38.9" y="100.4" width="4.5" height="3.0" fill="#e0b8c8" transform="rotate(45 38.9 100.4)"/><rect x="39.7" y="104.1" width="3.8" height="2.5" fill="#6a80d0" transform="rotate(84 39.7 104.1)"/><rect x="77.3" y="71.8" width="2.4" height="1.6" fill="#9070b8" transform="rotate(56 77.3 71.8)"/><rect x="50.9" y="92.7" width="4.3" height="2.9" fill="#68b8a0" transform="rotate(31 50.9 92.7)"/><rect x="151.0" y="97.3" width="2.3" height="1.5" fill="#9070b8" transform="rotate(70 151.0 97.3)"/><rect x="108.9" y="65.3" width="4.7" height="3.1" fill="#68b8a0" transform="rotate(88 108.9 65.3)"/><rect x="132.0" y="105.8" width="3.5" height="2.3" fill="#c87aa0" transform="rotate(36 132.0 105.8)"/><rect x="76.9" y="106.4" width="4.0" height="2.7" fill="#b890c8" transform="rotate(53 76.9 106.4)"/><rect x="210.7" y="81.1" width="4.6" height="3.1" fill="#d88ab0" transform="rotate(59 210.7 81.1)"/><rect x="215.0" y="73.4" width="2.7" height="1.8" fill="#6a80d0" transform="rotate(57 215.0 73.4)"/><rect x="47.5" y="96.2" width="4.4" height="2.9" fill="#f0c8d8" transform="rotate(53 47.5 96.2)"/><rect x="54.1" y="87.3" width="3.0" height="2.0" fill="#58a8b0" transform="rotate(3 54.1 87.3)"/><rect x="198.2" y="97.5" width="3.7" height="2.5" fill="#58a8b0" transform="rotate(57 198.2 97.5)"/><rect x="60.2" y="79.0" width="3.9" height="2.6" fill="#d88ab0" transform="rotate(20 60.2 79.0)"/><rect x="173.2" y="96.5" width="4.5" height="3.0" fill="#68b8a0" transform="rotate(23 173.2 96.5)"/><rect x="205.3" y="97.6" width="4.4" height="2.9" fill="#3a2a30" transform="rotate(40 205.3 97.6)"/><rect x="102.5" y="55.1" width="3.4" height="2.3" fill="#3a2a30" transform="rotate(56 102.5 55.1)"/><rect x="120.5" y="99.7" width="4.2" height="2.8" fill="#9070b8" transform="rotate(34 120.5 99.7)"/><rect x="93.5" y="82.3" width="4.5" height="3.0" fill="#5a4a60" transform="rotate(72 93.5 82.3)"/><rect x="149.5" y="55.6" width="4.8" height="3.2" fill="#68b8a0" transform="rotate(53 149.5 55.6)"/><rect x="136.0" y="95.8" width="2.6" height="1.7" fill="#3a2a30" transform="rotate(79 136.0 95.8)"/><rect x="126.3" y="55.5" width="3.5" height="2.4" fill="#c87aa0" transform="rotate(83 126.3 55.5)"/><rect x="203.7" y="85.5" width="3.7" height="2.4" fill="#68b8a0" transform="rotate(20 203.7 85.5)"/><rect x="202.5" y="102.4" width="3.7" height="2.5" fill="#f0c8d8" transform="rotate(82 202.5 102.4)"/><rect x="50.1" y="93.2" width="3.8" height="2.5" fill="#58a8b0" transform="rotate(33 50.1 93.2)"/><rect x="102.4" y="98.5" width="2.8" height="1.9" fill="#b890c8" transform="rotate(26 102.4 98.5)"/><rect x="74.5" y="74.7" width="4.3" height="2.9" fill="#c87aa0" transform="rotate(51 74.5 74.7)"/><rect x="159.1" y="102.1" width="3.6" height="2.4" fill="#4a3a48" transform="rotate(77 159.1 102.1)"/><rect x="71.4" y="92.9" width="4.0" height="2.7" fill="#3a2a30" transform="rotate(70 71.4 92.9)"/><rect x="102.6" y="104.5" width="2.3" height="1.5" fill="#f0c8d8" transform="rotate(82 102.6 104.5)"/><rect x="37.8" y="92.4" width="2.4" height="1.6" fill="#3a2a30" transform="rotate(78 37.8 92.4)"/><rect x="70.1" y="89.0" width="3.4" height="2.3" fill="#3a2a30" transform="rotate(24 70.1 89.0)"/><rect x="106.3" y="103.3" width="4.4" height="2.9" fill="#5a4a60" transform="rotate(22 106.3 103.3)"/><rect x="156.8" y="103.4" width="2.8" height="1.9" fill="#f0c8d8" transform="rotate(78 156.8 103.4)"/><rect x="98.0" y="72.9" width="3.0" height="2.0" fill="#f0c8d8" transform="rotate(82 98.0 72.9)"/><rect x="213.2" y="88.6" width="3.2" height="2.1" fill="#6a80d0" transform="rotate(55 213.2 88.6)"/><rect x="58.5" y="96.3" width="3.6" height="2.4" fill="#9070b8" transform="rotate(77 58.5 96.3)"/><rect x="66.1" y="95.3" width="2.9" height="1.9" fill="#f0c8d8" transform="rotate(15 66.1 95.3)"/><rect x="52.3" y="103.5" width="3.7" height="2.5" fill="#d88ab0" transform="rotate(66 52.3 103.5)"/><rect x="224.6" y="77.9" width="3.8" height="2.5" fill="#3a2a30" transform="rotate(88 224.6 77.9)"/><rect x="77.9" y="67.3" width="2.3" height="1.5" fill="#6a80d0" transform="rotate(84 77.9 67.3)"/><rect x="46.8" y="80.8" width="3.7" height="2.5" fill="#58a8b0" transform="rotate(87 46.8 80.8)"/><rect x="92.1" y="77.5" width="3.6" height="2.4" fill="#4a3a48" transform="rotate(35 92.1 77.5)"/><rect x="184.0" y="84.2" width="3.8" height="2.5" fill="#9070b8" transform="rotate(70 184.0 84.2)"/><rect x="188.4" y="63.5" width="3.2" height="2.1" fill="#9070b8" transform="rotate(55 188.4 63.5)"/><rect x="133.5" y="101.0" width="2.7" height="1.8" fill="#b890c8" transform="rotate(18 133.5 101.0)"/><rect x="110.8" y="56.8" width="3.1" height="2.0" fill="#d88ab0" transform="rotate(78 110.8 56.8)"/><rect x="78.3" y="94.2" width="3.5" height="2.3" fill="#4a3a48" transform="rotate(81 78.3 94.2)"/><rect x="171.1" y="71.9" width="2.9" height="2.0" fill="#b890c8" transform="rotate(86 171.1 71.9)"/><rect x="145.1" y="54.7" width="4.7" height="3.1" fill="#68b8a0" transform="rotate(61 145.1 54.7)"/><rect x="186.3" y="73.5" width="3.2" height="2.1" fill="#f0c8d8" transform="rotate(21 186.3 73.5)"/><rect x="91.4" y="87.8" width="2.3" height="1.5" fill="#68b8a0" transform="rotate(25 91.4 87.8)"/><rect x="220.8" y="76.7" width="4.3" height="2.8" fill="#5a4a60" transform="rotate(20 220.8 76.7)"/><rect x="209.6" y="72.3" width="4.5" height="3.0" fill="#9070b8" transform="rotate(14 209.6 72.3)"/><rect x="158.8" y="106.1" width="2.3" height="1.5" fill="#b890c8" transform="rotate(72 158.8 106.1)"/><rect x="230.5" y="84.9" width="3.1" height="2.1" fill="#9070b8" transform="rotate(65 230.5 84.9)"/><rect x="166.1" y="78.8" width="3.5" height="2.3" fill="#9070b8" transform="rotate(56 166.1 78.8)"/><rect x="78.7" y="76.1" width="3.1" height="2.1" fill="#e898a8" transform="rotate(34 78.7 76.1)"/><rect x="163.4" y="103.3" width="2.9" height="1.9" fill="#58a8b0" transform="rotate(87 163.4 103.3)"/><rect x="83.5" y="91.2" width="3.5" height="2.3" fill="#e898a8" transform="rotate(32 83.5 91.2)"/><rect x="110.4" y="106.9" width="3.3" height="2.2" fill="#e898a8" transform="rotate(73 110.4 106.9)"/><rect x="60.3" y="102.3" width="3.7" height="2.5" fill="#e898a8" transform="rotate(19 60.3 102.3)"/><rect x="41.1" y="97.0" width="4.7" height="3.1" fill="#9070b8" transform="rotate(22 41.1 97.0)"/><rect x="126.9" y="104.9" width="2.3" height="1.5" fill="#e0b8c8" transform="rotate(6 126.9 104.9)"/><rect x="202.4" y="85.9" width="4.4" height="3.0" fill="#4a3a48" transform="rotate(75 202.4 85.9)"/><rect x="105.9" y="91.6" width="4.6" height="3.1" fill="#e898a8" transform="rotate(61 105.9 91.6)"/><rect x="188.1" y="78.7" width="3.7" height="2.5" fill="#6a80d0" transform="rotate(11 188.1 78.7)"/><rect x="158.9" y="55.0" width="3.5" height="2.4" fill="#e0b8c8" transform="rotate(88 158.9 55.0)"/><rect x="80.7" y="78.5" width="3.5" height="2.4" fill="#6a80d0" transform="rotate(22 80.7 78.5)"/><rect x="82.8" y="92.9" width="4.4" height="3.0" fill="#c87aa0" transform="rotate(14 82.8 92.9)"/><rect x="47.7" y="81.8" width="4.5" height="3.0" fill="#6a80d0" transform="rotate(75 47.7 81.8)"/><rect x="172.7" y="106.7" width="2.8" height="1.9" fill="#f0c8d8" transform="rotate(68 172.7 106.7)"/><rect x="71.7" y="93.3" width="4.3" height="2.8" fill="#e898a8" transform="rotate(31 71.7 93.3)"/><rect x="34.0" y="96.7" width="2.5" height="1.6" fill="#58a8b0" transform="rotate(28 34.0 96.7)"/><rect x="68.8" y="82.9" width="2.3" height="1.5" fill="#9070b8" transform="rotate(47 68.8 82.9)"/><rect x="121.0" y="96.9" width="3.4" height="2.3" fill="#5a4a60" transform="rotate(1 121.0 96.9)"/><rect x="56.1" y="88.2" width="4.0" height="2.7" fill="#e0b8c8" transform="rotate(40 56.1 88.2)"/><rect x="44.4" y="98.1" width="2.8" height="1.9" fill="#e898a8" transform="rotate(45 44.4 98.1)"/><rect x="183.8" y="65.9" width="2.3" height="1.5" fill="#e898a8" transform="rotate(40 183.8 65.9)"/><rect x="173.6" y="75.4" width="3.2" height="2.1" fill="#3a2a30" transform="rotate(13 173.6 75.4)"/><rect x="188.7" y="75.6" width="3.5" height="2.3" fill="#f0c8d8" transform="rotate(45 188.7 75.6)"/><rect x="62.8" y="86.6" width="3.3" height="2.2" fill="#c87aa0" transform="rotate(16 62.8 86.6)"/><rect x="187.4" y="59.5" width="4.7" height="3.1" fill="#b890c8" transform="rotate(47 187.4 59.5)"/><rect x="182.9" y="94.1" width="3.9" height="2.6" fill="#68b8a0" transform="rotate(5 182.9 94.1)"/><rect x="124.7" y="53.1" width="4.2" height="2.8" fill="#b890c8" transform="rotate(29 124.7 53.1)"/><rect x="127.9" y="53.0" width="3.8" height="2.5" fill="#f0c8d8" transform="rotate(67 127.9 53.0)"/><rect x="191.6" y="67.8" width="3.8" height="2.5" fill="#3a2a30" transform="rotate(58 191.6 67.8)"/><rect x="126.9" y="97.6" width="4.5" height="3.0" fill="#e0b8c8" transform="rotate(10 126.9 97.6)"/><rect x="203.8" y="94.5" width="4.6" height="3.0" fill="#4a3a48" transform="rotate(67 203.8 94.5)"/><rect x="168.8" y="65.7" width="2.6" height="1.8" fill="#f0c8d8" transform="rotate(55 168.8 65.7)"/><rect x="80.3" y="68.7" width="2.3" height="1.5" fill="#4a3a48" transform="rotate(17 80.3 68.7)"/><rect x="97.0" y="69.3" width="2.4" height="1.6" fill="#68b8a0" transform="rotate(73 97.0 69.3)"/><rect x="162.8" y="93.6" width="3.7" height="2.4" fill="#3a2a30" transform="rotate(74 162.8 93.6)"/><rect x="95.9" y="97.6" width="2.8" height="1.9" fill="#e898a8" transform="rotate(66 95.9 97.6)"/><rect x="200.1" y="87.9" width="4.7" height="3.1" fill="#b890c8" transform="rotate(17 200.1 87.9)"/><rect x="45.8" y="106.8" width="4.3" height="2.8" fill="#c87aa0" transform="rotate(35 45.8 106.8)"/><rect x="197.0" y="88.0" width="2.4" height="1.6" fill="#58a8b0" transform="rotate(38 197.0 88.0)"/><rect x="102.9" y="87.3" width="4.4" height="2.9" fill="#b890c8" transform="rotate(22 102.9 87.3)"/><rect x="219.3" y="101.7" width="3.2" height="2.1" fill="#3a2a30" transform="rotate(63 219.3 101.7)"/><rect x="100.0" y="92.7" width="3.9" height="2.6" fill="#5a4a60" transform="rotate(18 100.0 92.7)"/><rect x="124.9" y="94.2" width="3.8" height="2.5" fill="#f0c8d8" transform="rotate(84 124.9 94.2)"/><rect x="179.7" y="75.1" width="4.1" height="2.7" fill="#e898a8" transform="rotate(72 179.7 75.1)"/><rect x="149.8" y="103.8" width="3.0" height="2.0" fill="#b890c8" transform="rotate(70 149.8 103.8)"/><rect x="43.4" y="99.7" width="4.0" height="2.7" fill="#e0b8c8" transform="rotate(5 43.4 99.7)"/><rect x="78.2" y="99.8" width="3.9" height="2.6" fill="#b890c8" transform="rotate(76 78.2 99.8)"/><rect x="103.9" y="83.9" width="4.2" height="2.8" fill="#58a8b0" transform="rotate(24 103.9 83.9)"/><rect x="140.3" y="92.6" width="4.3" height="2.9" fill="#e898a8" transform="rotate(17 140.3 92.6)"/><rect x="90.1" y="101.4" width="4.1" height="2.8" fill="#e0b8c8" transform="rotate(90 90.1 101.4)"/><rect x="81.3" y="104.4" width="3.3" height="2.2" fill="#5a4a60" transform="rotate(11 81.3 104.4)"/><rect x="183.6" y="60.6" width="3.2" height="2.1" fill="#e898a8" transform="rotate(31 183.6 60.6)"/><rect x="100.3" y="71.9" width="2.7" height="1.8" fill="#58a8b0" transform="rotate(84 100.3 71.9)"/><rect x="49.6" y="95.8" width="2.9" height="1.9" fill="#e0b8c8" transform="rotate(22 49.6 95.8)"/><rect x="119.9" y="105.6" width="4.0" height="2.7" fill="#c87aa0" transform="rotate(34 119.9 105.6)"/><rect x="221.9" y="103.2" width="2.7" height="1.8" fill="#e898a8" transform="rotate(58 221.9 103.2)"/><rect x="98.9" y="86.2" width="4.7" height="3.1" fill="#d88ab0" transform="rotate(62 98.9 86.2)"/><rect x="131.8" y="98.3" width="2.5" height="1.6" fill="#5a4a60" transform="rotate(85 131.8 98.3)"/><rect x="97.1" y="89.8" width="3.3" height="2.2" fill="#58a8b0" transform="rotate(57 97.1 89.8)"/><rect x="81.0" y="81.0" width="3.1" height="2.1" fill="#e0b8c8" transform="rotate(31 81.0 81.0)"/><rect x="42.8" y="92.8" width="4.6" height="3.1" fill="#5a4a60" transform="rotate(10 42.8 92.8)"/><rect x="203.0" y="86.8" width="3.5" height="2.3" fill="#3a2a30" transform="rotate(88 203.0 86.8)"/><rect x="179.9" y="98.5" width="2.4" height="1.6" fill="#f0c8d8" transform="rotate(22 179.9 98.5)"/><rect x="109.1" y="64.8" width="3.0" height="2.0" fill="#e898a8" transform="rotate(14 109.1 64.8)"/><rect x="108.2" y="89.3" width="4.2" height="2.8" fill="#3a2a30" transform="rotate(20 108.2 89.3)"/><rect x="171.4" y="102.7" width="2.5" height="1.6" fill="#68b8a0" transform="rotate(17 171.4 102.7)"/><rect x="172.0" y="60.8" width="4.3" height="2.8" fill="#e898a8" transform="rotate(64 172.0 60.8)"/><rect x="174.6" y="69.0" width="2.3" height="1.5" fill="#9070b8" transform="rotate(4 174.6 69.0)"/><rect x="111.8" y="97.5" width="3.9" height="2.6" fill="#c87aa0" transform="rotate(67 111.8 97.5)"/><rect x="45.6" y="103.5" width="4.8" height="3.2" fill="#9070b8" transform="rotate(69 45.6 103.5)"/><rect x="197.2" y="73.5" width="3.0" height="2.0" fill="#e0b8c8" transform="rotate(40 197.2 73.5)"/><rect x="232.0" y="100.3" width="4.8" height="3.2" fill="#b890c8" transform="rotate(6 232.0 100.3)"/><rect x="52.0" y="76.0" width="3.9" height="2.6" fill="#f0c8d8" transform="rotate(12 52.0 76.0)"/><rect x="167.1" y="70.9" width="4.0" height="2.6" fill="#5a4a60" transform="rotate(62 167.1 70.9)"/><rect x="205.8" y="90.7" width="4.1" height="2.7" fill="#4a3a48" transform="rotate(21 205.8 90.7)"/><rect x="234.8" y="105.3" width="3.8" height="2.5" fill="#3a2a30" transform="rotate(65 234.8 105.3)"/><rect x="191.9" y="105.3" width="3.2" height="2.1" fill="#e898a8" transform="rotate(57 191.9 105.3)"/><rect x="87.0" y="82.6" width="2.6" height="1.8" fill="#4a3a48" transform="rotate(10 87.0 82.6)"/><rect x="136.5" y="90.0" width="4.5" height="3.0" fill="#c87aa0" transform="rotate(5 136.5 90.0)"/><rect x="225.2" y="85.8" width="3.0" height="2.0" fill="#68b8a0" transform="rotate(6 225.2 85.8)"/><rect x="71.4" y="95.7" width="4.7" height="3.1" fill="#b890c8" transform="rotate(78 71.4 95.7)"/><rect x="179.1" y="73.5" width="3.5" height="2.3" fill="#58a8b0" transform="rotate(13 179.1 73.5)"/><rect x="68.2" y="80.0" width="2.8" height="1.9" fill="#68b8a0" transform="rotate(58 68.2 80.0)"/><rect x="86.0" y="62.2" width="3.1" height="2.0" fill="#58a8b0" transform="rotate(82 86.0 62.2)"/><rect x="183.4" y="88.7" width="2.6" height="1.7" fill="#68b8a0" transform="rotate(15 183.4 88.7)"/><rect x="166.3" y="77.6" width="4.0" height="2.7" fill="#4a3a48" transform="rotate(39 166.3 77.6)"/><rect x="48.0" y="89.7" width="2.5" height="1.7" fill="#d88ab0" transform="rotate(38 48.0 89.7)"/><rect x="66.8" y="95.9" width="2.7" height="1.8" fill="#f0c8d8" transform="rotate(9 66.8 95.9)"/><rect x="237.5" y="92.1" width="2.5" height="1.7" fill="#f0c8d8" transform="rotate(4 237.5 92.1)"/><rect x="110.2" y="58.8" width="3.9" height="2.6" fill="#5a4a60" transform="rotate(29 110.2 58.8)"/><rect x="84.2" y="94.3" width="4.0" height="2.7" fill="#e898a8" transform="rotate(26 84.2 94.3)"/><rect x="112.0" y="78.4" width="4.6" height="3.1" fill="#58a8b0" transform="rotate(4 112.0 78.4)"/><rect x="185.2" y="72.6" width="4.2" height="2.8" fill="#6a80d0" transform="rotate(34 185.2 72.6)"/><rect x="63.4" y="77.1" width="4.7" height="3.1" fill="#c87aa0" transform="rotate(15 63.4 77.1)"/><rect x="148.9" y="56.7" width="4.2" height="2.8" fill="#4a3a48" transform="rotate(72 148.9 56.7)"/><rect x="204.6" y="93.8" width="3.4" height="2.3" fill="#b890c8" transform="rotate(0 204.6 93.8)"/><rect x="163.8" y="95.4" width="3.4" height="2.2" fill="#f0c8d8" transform="rotate(17 163.8 95.4)"/><rect x="87.0" y="101.3" width="4.2" height="2.8" fill="#e0b8c8" transform="rotate(38 87.0 101.3)"/><rect x="182.1" y="93.8" width="4.8" height="3.2" fill="#58a8b0" transform="rotate(90 182.1 93.8)"/><rect x="87.7" y="71.9" width="3.0" height="2.0" fill="#4a3a48" transform="rotate(10 87.7 71.9)"/><rect x="195.4" y="93.5" width="4.3" height="2.8" fill="#58a8b0" transform="rotate(8 195.4 93.5)"/><rect x="166.1" y="104.6" width="3.0" height="2.0" fill="#d88ab0" transform="rotate(26 166.1 104.6)"/><rect x="166.0" y="85.7" width="3.6" height="2.4" fill="#b890c8" transform="rotate(9 166.0 85.7)"/><rect x="85.2" y="78.4" width="4.8" height="3.2" fill="#5a4a60" transform="rotate(24 85.2 78.4)"/><rect x="186.6" y="63.2" width="3.5" height="2.4" fill="#f0c8d8" transform="rotate(48 186.6 63.2)"/><rect x="197.9" y="81.2" width="4.8" height="3.2" fill="#3a2a30" transform="rotate(40 197.9 81.2)"/><rect x="105.3" y="66.7" width="2.6" height="1.7" fill="#5a4a60" transform="rotate(22 105.3 66.7)"/><rect x="222.9" y="89.0" width="4.2" height="2.8" fill="#e898a8" transform="rotate(67 222.9 89.0)"/><rect x="199.4" y="81.2" width="3.2" height="2.1" fill="#e0b8c8" transform="rotate(6 199.4 81.2)"/><rect x="80.9" y="72.9" width="3.0" height="2.0" fill="#e0b8c8" transform="rotate(1 80.9 72.9)"/><rect x="207.9" y="101.6" width="3.5" height="2.3" fill="#9070b8" transform="rotate(82 207.9 101.6)"/><rect x="89.8" y="104.3" width="2.5" height="1.7" fill="#e0b8c8" transform="rotate(79 89.8 104.3)"/><rect x="48.2" y="95.4" width="4.6" height="3.1" fill="#5a4a60" transform="rotate(67 48.2 95.4)"/><rect x="105.0" y="68.1" width="3.5" height="2.4" fill="#c87aa0" transform="rotate(27 105.0 68.1)"/><rect x="90.7" y="104.5" width="3.3" height="2.2" fill="#d88ab0" transform="rotate(14 90.7 104.5)"/><rect x="59.5" y="90.3" width="2.3" height="1.5" fill="#e0b8c8" transform="rotate(61 59.5 90.3)"/><rect x="225.8" y="86.2" width="3.2" height="2.2" fill="#6a80d0" transform="rotate(18 225.8 86.2)"/><rect x="74.7" y="84.1" width="3.3" height="2.2" fill="#9070b8" transform="rotate(6 74.7 84.1)"/><rect x="60.2" y="74.0" width="2.3" height="1.6" fill="#5a4a60" transform="rotate(82 60.2 74.0)"/><rect x="116.2" y="56.0" width="2.7" height="1.8" fill="#68b8a0" transform="rotate(78 116.2 56.0)"/><rect x="212.4" y="96.3" width="4.3" height="2.8" fill="#6a80d0" transform="rotate(87 212.4 96.3)"/><rect x="79.1" y="65.1" width="2.9" height="1.9" fill="#c87aa0" transform="rotate(36 79.1 65.1)"/><rect x="152.0" y="56.7" width="4.7" height="3.1" fill="#58a8b0" transform="rotate(18 152.0 56.7)"/><rect x="191.6" y="98.0" width="2.3" height="1.5" fill="#68b8a0" transform="rotate(57 191.6 98.0)"/><rect x="184.0" y="77.7" width="3.5" height="2.3" fill="#6a80d0" transform="rotate(58 184.0 77.7)"/><rect x="104.2" y="93.4" width="2.5" height="1.7" fill="#3a2a30" transform="rotate(18 104.2 93.4)"/><rect x="185.5" y="71.3" width="4.3" height="2.9" fill="#58a8b0" transform="rotate(54 185.5 71.3)"/><rect x="53.9" y="91.5" width="3.5" height="2.3" fill="#9070b8" transform="rotate(5 53.9 91.5)"/><rect x="155.7" y="102.0" width="3.2" height="2.1" fill="#4a3a48" transform="rotate(60 155.7 102.0)"/><rect x="185.6" y="90.0" width="4.3" height="2.9" fill="#f0c8d8" transform="rotate(70 185.6 90.0)"/><rect x="43.1" y="83.7" width="4.1" height="2.7" fill="#6a80d0" transform="rotate(81 43.1 83.7)"/><rect x="67.2" y="96.0" width="4.0" height="2.7" fill="#68b8a0" transform="rotate(60 67.2 96.0)"/><rect x="102.8" y="103.2" width="4.7" height="3.2" fill="#e898a8" transform="rotate(11 102.8 103.2)"/><rect x="175.2" y="102.9" width="4.3" height="2.9" fill="#9070b8" transform="rotate(85 175.2 102.9)"/><rect x="129.2" y="104.1" width="4.8" height="3.2" fill="#c87aa0" transform="rotate(4 129.2 104.1)"/><rect x="78.7" y="97.0" width="2.8" height="1.9" fill="#3a2a30" transform="rotate(62 78.7 97.0)"/><rect x="76.4" y="100.2" width="4.6" height="3.1" fill="#5a4a60" transform="rotate(11 76.4 100.2)"/><rect x="94.2" y="60.4" width="4.7" height="3.2" fill="#58a8b0" transform="rotate(12 94.2 60.4)"/><rect x="207.0" y="68.8" width="4.7" height="3.1" fill="#9070b8" transform="rotate(35 207.0 68.8)"/><rect x="93.1" y="104.4" width="2.9" height="1.9" fill="#9070b8" transform="rotate(73 93.1 104.4)"/><rect x="168.8" y="56.8" width="4.5" height="3.0" fill="#4a3a48" transform="rotate(77 168.8 56.8)"/><rect x="184.6" y="70.9" width="4.6" height="3.0" fill="#68b8a0" transform="rotate(64 184.6 70.9)"/><rect x="164.4" y="104.4" width="3.6" height="2.4" fill="#58a8b0" transform="rotate(58 164.4 104.4)"/><rect x="91.9" y="81.5" width="2.8" height="1.8" fill="#f0c8d8" transform="rotate(74 91.9 81.5)"/><rect x="97.3" y="89.8" width="2.4" height="1.6" fill="#c87aa0" transform="rotate(23 97.3 89.8)"/><rect x="165.5" y="104.4" width="3.8" height="2.5" fill="#5a4a60" transform="rotate(16 165.5 104.4)"/><rect x="138.1" y="90.5" width="4.4" height="2.9" fill="#6a80d0" transform="rotate(76 138.1 90.5)"/><rect x="209.2" y="98.3" width="4.7" height="3.1" fill="#58a8b0" transform="rotate(17 209.2 98.3)"/><rect x="78.0" y="63.6" width="4.7" height="3.1" fill="#b890c8" transform="rotate(1 78.0 63.6)"/><rect x="176.7" y="71.6" width="3.3" height="2.2" fill="#d88ab0" transform="rotate(73 176.7 71.6)"/><rect x="139.2" y="55.1" width="4.0" height="2.7" fill="#3a2a30" transform="rotate(15 139.2 55.1)"/><rect x="46.0" y="81.0" width="3.0" height="2.0" fill="#d88ab0" transform="rotate(57 46.0 81.0)"/><rect x="208.9" y="74.0" width="3.1" height="2.1" fill="#3a2a30" transform="rotate(26 208.9 74.0)"/><rect x="80.3" y="95.3" width="2.8" height="1.9" fill="#d88ab0" transform="rotate(24 80.3 95.3)"/><rect x="103.4" y="78.5" width="3.4" height="2.2" fill="#5a4a60" transform="rotate(28 103.4 78.5)"/><rect x="83.7" y="74.5" width="2.9" height="1.9" fill="#4a3a48" transform="rotate(58 83.7 74.5)"/><rect x="102.2" y="73.1" width="2.9" height="1.9" fill="#6a80d0" transform="rotate(33 102.2 73.1)"/><rect x="172.7" y="93.8" width="4.0" height="2.7" fill="#58a8b0" transform="rotate(1 172.7 93.8)"/><rect x="95.8" y="80.0" width="4.4" height="2.9" fill="#58a8b0" transform="rotate(9 95.8 80.0)"/><rect x="100.7" y="75.6" width="3.1" height="2.0" fill="#d88ab0" transform="rotate(78 100.7 75.6)"/><rect x="56.8" y="100.1" width="3.3" height="2.2" fill="#6a80d0" transform="rotate(7 56.8 100.1)"/><rect x="66.7" y="98.7" width="3.0" height="2.0" fill="#c87aa0" transform="rotate(40 66.7 98.7)"/><rect x="76.3" y="65.5" width="4.1" height="2.7" fill="#58a8b0" transform="rotate(45 76.3 65.5)"/><rect x="44.1" y="104.9" width="3.9" height="2.6" fill="#f0c8d8" transform="rotate(29 44.1 104.9)"/><rect x="67.5" y="86.6" width="2.9" height="1.9" fill="#b890c8" transform="rotate(1 67.5 86.6)"/><rect x="158.6" y="54.1" width="3.9" height="2.6" fill="#6a80d0" transform="rotate(87 158.6 54.1)"/><rect x="185.5" y="88.4" width="4.8" height="3.2" fill="#d88ab0" transform="rotate(87 185.5 88.4)"/><rect x="92.6" y="94.4" width="3.5" height="2.3" fill="#b890c8" transform="rotate(11 92.6 94.4)"/><rect x="140.5" y="102.5" width="3.3" height="2.2" fill="#d88ab0" transform="rotate(31 140.5 102.5)"/><rect x="66.8" y="71.2" width="4.1" height="2.7" fill="#e0b8c8" transform="rotate(51 66.8 71.2)"/><rect x="163.1" y="91.8" width="4.3" height="2.9" fill="#e898a8" transform="rotate(61 163.1 91.8)"/><rect x="57.8" y="105.5" width="4.2" height="2.8" fill="#3a2a30" transform="rotate(37 57.8 105.5)"/><rect x="217.6" y="74.4" width="3.8" height="2.6" fill="#f0c8d8" transform="rotate(64 217.6 74.4)"/><rect x="109.2" y="82.6" width="4.3" height="2.9" fill="#4a3a48" transform="rotate(56 109.2 82.6)"/><rect x="222.2" y="82.0" width="3.2" height="2.1" fill="#58a8b0" transform="rotate(75 222.2 82.0)"/><rect x="215.3" y="104.7" width="3.5" height="2.3" fill="#e0b8c8" transform="rotate(57 215.3 104.7)"/><rect x="181.3" y="83.2" width="4.0" height="2.7" fill="#e898a8" transform="rotate(47 181.3 83.2)"/><rect x="201.3" y="95.0" width="4.8" height="3.2" fill="#c87aa0" transform="rotate(17 201.3 95.0)"/><rect x="178.2" y="64.0" width="2.5" height="1.6" fill="#d88ab0" transform="rotate(38 178.2 64.0)"/><rect x="194.0" y="91.2" width="3.7" height="2.5" fill="#e0b8c8" transform="rotate(11 194.0 91.2)"/><rect x="55.3" y="76.0" width="3.4" height="2.3" fill="#e898a8" transform="rotate(40 55.3 76.0)"/><rect x="162.6" y="100.6" width="2.6" height="1.7" fill="#6a80d0" transform="rotate(6 162.6 100.6)"/><rect x="91.4" y="79.4" width="3.7" height="2.5" fill="#3a2a30" transform="rotate(73 91.4 79.4)"/><rect x="221.2" y="98.9" width="4.1" height="2.7" fill="#e0b8c8" transform="rotate(11 221.2 98.9)"/><rect x="188.1" y="102.3" width="3.2" height="2.1" fill="#58a8b0" transform="rotate(31 188.1 102.3)"/><rect x="73.2" y="71.6" width="3.9" height="2.6" fill="#c87aa0" transform="rotate(55 73.2 71.6)"/><rect x="221.9" y="76.4" width="4.0" height="2.7" fill="#c87aa0" transform="rotate(78 221.9 76.4)"/><rect x="81.9" y="66.4" width="2.4" height="1.6" fill="#f0c8d8" transform="rotate(29 81.9 66.4)"/><rect x="125.9" y="95.7" width="3.1" height="2.1" fill="#3a2a30" transform="rotate(55 125.9 95.7)"/><rect x="179.7" y="79.8" width="3.0" height="2.0" fill="#c87aa0" transform="rotate(6 179.7 79.8)"/><rect x="180.0" y="70.9" width="2.9" height="1.9" fill="#4a3a48" transform="rotate(79 180.0 70.9)"/><rect x="64.7" y="73.0" width="3.4" height="2.3" fill="#4a3a48" transform="rotate(4 64.7 73.0)"/><rect x="111.6" y="105.8" width="4.4" height="2.9" fill="#9070b8" transform="rotate(70 111.6 105.8)"/><rect x="161.2" y="100.5" width="3.0" height="2.0" fill="#3a2a30" transform="rotate(78 161.2 100.5)"/><rect x="213.7" y="98.7" width="3.8" height="2.5" fill="#9070b8" transform="rotate(10 213.7 98.7)"/><rect x="234.5" y="103.8" width="3.1" height="2.1" fill="#5a4a60" transform="rotate(43 234.5 103.8)"/><rect x="216.7" y="104.8" width="2.8" height="1.9" fill="#c87aa0" transform="rotate(80 216.7 104.8)"/><rect x="84.2" y="88.1" width="2.8" height="1.9" fill="#c87aa0" transform="rotate(12 84.2 88.1)"/><rect x="193.4" y="87.8" width="2.7" height="1.8" fill="#5a4a60" transform="rotate(45 193.4 87.8)"/><rect x="60.9" y="100.0" width="4.1" height="2.7" fill="#6a80d0" transform="rotate(76 60.9 100.0)"/><rect x="139.5" y="104.2" width="4.8" height="3.2" fill="#b890c8" transform="rotate(75 139.5 104.2)"/><rect x="82.9" y="98.2" width="4.4" height="3.0" fill="#6a80d0" transform="rotate(42 82.9 98.2)"/><rect x="136.5" y="106.4" width="3.8" height="2.5" fill="#3a2a30" transform="rotate(25 136.5 106.4)"/><rect x="185.7" y="63.4" width="2.4" height="1.6" fill="#b890c8" transform="rotate(66 185.7 63.4)"/><rect x="199.1" y="97.6" width="2.6" height="1.7" fill="#68b8a0" transform="rotate(44 199.1 97.6)"/><rect x="142.7" y="53.7" width="4.7" height="3.1" fill="#d88ab0" transform="rotate(82 142.7 53.7)"/><rect x="72.4" y="100.3" width="4.1" height="2.8" fill="#d88ab0" transform="rotate(57 72.4 100.3)"/><rect x="166.3" y="105.0" width="4.4" height="2.9" fill="#b890c8" transform="rotate(40 166.3 105.0)"/><rect x="47.0" y="82.8" width="4.5" height="3.0" fill="#e0b8c8" transform="rotate(76 47.0 82.8)"/><rect x="195.2" y="90.6" width="4.2" height="2.8" fill="#e898a8" transform="rotate(56 195.2 90.6)"/><rect x="150.1" y="53.4" width="3.9" height="2.6" fill="#68b8a0" transform="rotate(90 150.1 53.4)"/><rect x="91.8" y="78.2" width="4.2" height="2.8" fill="#e898a8" transform="rotate(28 91.8 78.2)"/><rect x="190.6" y="104.4" width="3.4" height="2.3" fill="#d88ab0" transform="rotate(10 190.6 104.4)"/><rect x="120.7" y="98.6" width="2.5" height="1.7" fill="#d88ab0" transform="rotate(81 120.7 98.6)"/><rect x="93.8" y="64.0" width="2.6" height="1.7" fill="#5a4a60" transform="rotate(83 93.8 64.0)"/><rect x="38.9" y="89.9" width="3.0" height="2.0" fill="#3a2a30" transform="rotate(51 38.9 89.9)"/><rect x="145.6" y="93.2" width="4.8" height="3.2" fill="#e898a8" transform="rotate(68 145.6 93.2)"/><rect x="141.4" y="92.7" width="4.0" height="2.7" fill="#b890c8" transform="rotate(8 141.4 92.7)"/><rect x="209.2" y="97.7" width="4.7" height="3.2" fill="#58a8b0" transform="rotate(90 209.2 97.7)"/><rect x="186.8" y="65.5" width="4.4" height="2.9" fill="#58a8b0" transform="rotate(45 186.8 65.5)"/><rect x="168.1" y="86.3" width="3.5" height="2.3" fill="#58a8b0" transform="rotate(27 168.1 86.3)"/><rect x="49.2" y="87.4" width="2.8" height="1.9" fill="#3a2a30" transform="rotate(13 49.2 87.4)"/><rect x="97.2" y="102.1" width="4.4" height="2.9" fill="#d88ab0" transform="rotate(7 97.2 102.1)"/><rect x="43.7" y="98.2" width="4.3" height="2.9" fill="#68b8a0" transform="rotate(43 43.7 98.2)"/><rect x="78.3" y="96.9" width="3.1" height="2.1" fill="#d88ab0" transform="rotate(60 78.3 96.9)"/><rect x="109.3" y="73.3" width="4.4" height="3.0" fill="#c87aa0" transform="rotate(30 109.3 73.3)"/><rect x="177.0" y="83.7" width="4.2" height="2.8" fill="#e898a8" transform="rotate(84 177.0 83.7)"/><rect x="165.1" y="57.2" width="3.3" height="2.2" fill="#f0c8d8" transform="rotate(58 165.1 57.2)"/><rect x="84.5" y="77.5" width="3.3" height="2.2" fill="#e0b8c8" transform="rotate(66 84.5 77.5)"/><rect x="129.5" y="55.3" width="2.7" height="1.8" fill="#e898a8" transform="rotate(17 129.5 55.3)"/><rect x="212.4" y="85.2" width="4.7" height="3.1" fill="#68b8a0" transform="rotate(89 212.4 85.2)"/><rect x="111.9" y="92.6" width="3.5" height="2.4" fill="#f0c8d8" transform="rotate(81 111.9 92.6)"/><rect x="206.9" y="99.0" width="4.4" height="3.0" fill="#58a8b0" transform="rotate(26 206.9 99.0)"/><rect x="192.6" y="63.3" width="2.3" height="1.5" fill="#e0b8c8" transform="rotate(72 192.6 63.3)"/><rect x="124.5" y="105.1" width="2.8" height="1.9" fill="#3a2a30" transform="rotate(21 124.5 105.1)"/><rect x="108.1" y="56.6" width="2.3" height="1.5" fill="#e898a8" transform="rotate(61 108.1 56.6)"/><rect x="179.9" y="87.2" width="4.4" height="2.9" fill="#e898a8" transform="rotate(52 179.9 87.2)"/><rect x="143.0" y="98.1" width="3.4" height="2.3" fill="#58a8b0" transform="rotate(68 143.0 98.1)"/><rect x="232.5" y="92.8" width="3.1" height="2.1" fill="#f0c8d8" transform="rotate(17 232.5 92.8)"/><rect x="53.8" y="92.2" width="4.0" height="2.7" fill="#6a80d0" transform="rotate(52 53.8 92.2)"/><rect x="211.3" y="82.0" width="2.3" height="1.5" fill="#f0c8d8" transform="rotate(59 211.3 82.0)"/><rect x="57.5" y="102.7" width="4.6" height="3.1" fill="#68b8a0" transform="rotate(56 57.5 102.7)"/><rect x="169.2" y="106.2" width="2.4" height="1.6" fill="#e0b8c8" transform="rotate(68 169.2 106.2)"/><rect x="226.9" y="89.1" width="2.4" height="1.6" fill="#58a8b0" transform="rotate(41 226.9 89.1)"/><rect x="205.0" y="82.5" width="4.6" height="3.1" fill="#3a2a30" transform="rotate(40 205.0 82.5)"/><rect x="220.5" y="97.8" width="4.2" height="2.8" fill="#58a8b0" transform="rotate(86 220.5 97.8)"/><rect x="83.0" y="74.7" width="3.6" height="2.4" fill="#b890c8" transform="rotate(51 83.0 74.7)"/><rect x="223.4" y="101.0" width="3.4" height="2.3" fill="#68b8a0" transform="rotate(8 223.4 101.0)"/><rect x="180.1" y="88.7" width="3.6" height="2.4" fill="#c87aa0" transform="rotate(35 180.1 88.7)"/><rect x="117.7" y="57.5" width="3.0" height="2.0" fill="#b890c8" transform="rotate(32 117.7 57.5)"/><rect x="61.0" y="77.0" width="4.5" height="3.0" fill="#3a2a30" transform="rotate(82 61.0 77.0)"/><rect x="66.5" y="73.9" width="3.9" height="2.6" fill="#3a2a30" transform="rotate(26 66.5 73.9)"/><rect x="39.0" y="92.6" width="4.6" height="3.1" fill="#5a4a60" transform="rotate(28 39.0 92.6)"/><rect x="176.7" y="89.2" width="3.1" height="2.1" fill="#68b8a0" transform="rotate(22 176.7 89.2)"/><rect x="46.7" y="95.5" width="3.6" height="2.4" fill="#9070b8" transform="rotate(65 46.7 95.5)"/><rect x="67.3" y="78.0" width="3.2" height="2.1" fill="#4a3a48" transform="rotate(73 67.3 78.0)"/><rect x="203.8" y="77.9" width="2.9" height="2.0" fill="#5a4a60" transform="rotate(62 203.8 77.9)"/><rect x="173.0" y="64.9" width="3.0" height="2.0" fill="#f0c8d8" transform="rotate(62 173.0 64.9)"/><rect x="73.0" y="71.3" width="3.9" height="2.6" fill="#3a2a30" transform="rotate(46 73.0 71.3)"/><rect x="63.5" y="77.8" width="3.4" height="2.3" fill="#5a4a60" transform="rotate(74 63.5 77.8)"/><rect x="39.5" y="88.0" width="2.5" height="1.7" fill="#9070b8" transform="rotate(89 39.5 88.0)"/><rect x="149.9" y="55.0" width="3.1" height="2.1" fill="#6a80d0" transform="rotate(56 149.9 55.0)"/><circle cx="44.5" cy="29.3" r="1.9" fill="#e0a0c0" opacity="0.7"/><circle cx="15.4" cy="21.8" r="2.0" fill="#e0a0c0" opacity="0.7"/><circle cx="212.4" cy="52.7" r="1.5" fill="#e0a0c0" opacity="0.7"/><circle cx="24.5" cy="44.4" r="2.0" fill="#e0a0c0" opacity="0.7"/><circle cx="14.9" cy="23.0" r="2.3" fill="#e0a0c0" opacity="0.7"/><circle cx="204.9" cy="58.2" r="1.6" fill="#e0a0c0" opacity="0.7"/><circle cx="70.0" cy="8.0" r="2.0" fill="#e0a0c0" opacity="0.7"/><circle cx="51.1" cy="56.5" r="1.5" fill="#e0a0c0" opacity="0.7"/><circle cx="228.4" cy="29.7" r="2.4" fill="#e0a0c0" opacity="0.7"/><circle cx="4.7" cy="50.3" r="2.0" fill="#e0a0c0" opacity="0.7"/><circle cx="238.3" cy="7.6" r="2.2" fill="#e0a0c0" opacity="0.7"/><circle cx="215.5" cy="50.7" r="2.4" fill="#e0a0c0" opacity="0.7"/><circle cx="16.5" cy="16.1" r="2.4" fill="#e0a0c0" opacity="0.7"/><circle cx="247.3" cy="33.0" r="1.9" fill="#e0a0c0" opacity="0.7"/><circle cx="232.5" cy="19.8" r="2.0" fill="#e0a0c0" opacity="0.7"/><circle cx="246.6" cy="30.3" r="2.3" fill="#e0a0c0" opacity="0.7"/></g>
</svg></div>
<div class="abs" style="left:1076px;top:228px;width:398px;height:325px;background:#fff;box-shadow:0 0 60px rgba(0,0,0,.25)">
  <div class="abs" style="left:0;top:0;width:398px;height:224px;overflow:hidden"><svg width="398" height="224" viewBox="0 0 398 224" style="position:absolute;left:0;top:0">
<defs><filter id="kb"><feGaussianBlur stdDeviation="1"/></filter><filter id="kb0"><feGaussianBlur stdDeviation="0.4"/></filter><filter id="kb3" x="-20%" y="-20%" width="140%" height="140%"><feGaussianBlur stdDeviation="2.5"/></filter>
<filter id="ktex" x="0" y="0" width="100%" height="100%"><feTurbulence type="fractalNoise" baseFrequency="0.18" numOctaves="2" seed="3"/><feColorMatrix values="0 0 0 0 0.12  0 0 0 0 0.16  0 0 0 0 0.09  0 0 0 -1.4 0.8"/><feComposite in2="SourceGraphic" operator="in"/></filter>
<filter id="ktex2" x="0" y="0" width="100%" height="100%"><feTurbulence type="fractalNoise" baseFrequency="0.09" numOctaves="2" seed="8"/><feColorMatrix values="0 0 0 0 0.35  0 0 0 0 0.45  0 0 0 0 0.22  0 0 0 -1.8 0.9"/><feComposite in2="SourceGraphic" operator="in"/></filter>
<linearGradient id="ksky" x1="0" y1="0" x2="0" y2="1"><stop offset="0" stop-color="#e4e5e2"/><stop offset="1" stop-color="#d6d9d7"/></linearGradient>
<linearGradient id="kmt" x1="0" y1="0" x2="0" y2="1"><stop offset="0" stop-color="#c4ccd0"/><stop offset="0.45" stop-color="#98aab2"/><stop offset="1" stop-color="#5a7886"/></linearGradient></defs>
<rect width="398" height="224" fill="url(#ksky)"/>
<g filter="url(#kb)">
<path d="M0 20 L20 15 L45 8 L60 5 L71 1 L83 8 L93 20 L107 15 L120 12 L133 13 L147 19 L160 20 L180 17 L197 24 L213 15 L240 17 L260 23 L269 29 L283 29 L296 32 L320 25 L333 31 L347 36 L377 27 L398 31 L398 80 L0 80 Z" fill="url(#kmt)"/>
<path d="M10 32 L40 20 L71 14 L90 30 L120 36 L150 46 L110 58 L20 56 Z" fill="#50707e" opacity="0.85"/>
<path d="M150 36 L185 28 L215 26 L245 34 L280 42 L300 52 L240 60 L160 58 Z" fill="#587684" opacity="0.8"/>
<path d="M300 40 L330 36 L360 44 L398 40 L398 62 L300 62 Z" fill="#5a7a86" opacity="0.8"/>
<path d="M60 6 L71 1 L83 9 L78 26 L64 24 Z" fill="#d8dcdc" opacity="0.6"/>
<path d="M205 20 L213 15 L240 17 L232 32 L210 30 Z" fill="#cdd3d5" opacity="0.6"/>
<path d="M310 28 L320 25 L333 31 L325 42 L312 40 Z" fill="#c8d0d2" opacity="0.5"/>
</g>
<g filter="url(#kb3)">
<path d="M85 50 Q120 43 150 50 Q180 44 205 48 Q225 46 240 50 L236 58 L95 58 Z" fill="#f2f3f2" opacity="0.9"/>
<path d="M247 54 Q290 50 320 54 Q340 52 355 56 L350 63 L250 63 Z" fill="#eef0f0" opacity="0.9"/>
<path d="M195 46 L240 44 L238 51 L198 52 Z" fill="#eef0f0" opacity="0.8"/>
</g>
<g filter="url(#kb)">
<path d="M268 62 L300 64 L345 64 L345 95 L270 95 Z" fill="#3f5e64"/>
<path d="M0 23 L20 43 L40 45 L60 51 L80 52 L93 56 L107 62 L150 58 L200 53 L240 58 L270 75 L293 95 L300 224 L0 224 Z" fill="#33432e"/>
<path d="M0 23 L20 43 L40 48 L55 60 L75 90 L95 130 L100 224 L0 224 Z" fill="#28351f"/>
<path d="M280 100 L320 80 L347 64 L397 47 L398 224 L260 224 Z" fill="#324236"/>
<path d="M0 150 L90 162 L170 155 L230 140 L300 142 L398 158 L398 224 L0 224 Z" fill="#354230"/>
<path d="M269 97 L330 100 L398 92 L398 224 L269 224 Z" fill="#2e3c2c"/>
</g>
<clipPath id="kfc"><path d="M0 23 L20 43 L40 45 L60 51 L80 52 L93 56 L107 62 L150 58 L200 53 L240 58 L268 62 L345 64 L397 47 L398 224 L0 224 Z"/></clipPath><rect y="20" width="398" height="204" fill="#000" filter="url(#ktex)" opacity="0.32" clip-path="url(#kfc)"/>
<rect y="130" width="398" height="94" fill="#000" filter="url(#ktex2)" opacity="0.22"/>
<path d="M228 108 Q250 104 276 108 L273 128 Q258 138 244 137 L232 126 Z" fill="#b9bdb9" filter="url(#kb0)"/>
<g filter="url(#kb0)">
<rect x="164" y="58" width="11" height="65" fill="#d8d4cc"/>
<path d="M165 60 L169.5 46 L174 60 Z" fill="#3a3a38"/>
<rect x="138" y="82" width="26" height="82" fill="#d2cdc4"/>
<path d="M138 82 L142 74 L146 82 Z M154 82 L158 74 L162 82 Z" fill="#4a4a48"/>
<rect x="158" y="100" width="18" height="64" fill="#c2bcb2"/>
<rect x="122" y="112" width="16" height="52" fill="#c8c2b8"/>
<rect x="82" y="132" width="9" height="34" fill="#d2cabc"/>
<rect x="91" y="138" width="48" height="28" fill="#a8644a"/>
<path d="M105 138 L115 126 L125 138 Z" fill="#b07058"/>
<rect x="138" y="128" width="9" height="38" fill="#cfc8ba"/>
<path d="M80 163 L193 160 L195 176 L80 178 Z" fill="#8e8e88"/>
<path d="M110 177 L166 175 L168 196 L112 198 Z" fill="#6a6e6a" opacity="0.7"/>
<rect x="302" y="127" width="20" height="13" fill="#bfa070"/>
<path d="M230 178 L268 174 L270 192 L232 196 Z" fill="#8a9090" opacity="0.6"/>
</g>
<circle cx="199.5" cy="112" r="35.5" fill="#2b2a30" fill-opacity="0.78"/>
<path d="M190 99.5 L213 112 L190 124.5 Z" fill="#fff" stroke="#fff" stroke-width="2" stroke-linejoin="round"/>
</svg></div>
  <svg class="abs" style="left:27px;top:252.5px" width="37" height="46"><path d="M3.5 1 H26 L35 10 V42 A3 3 0 0 1 32 45 H3.5 A2.5 2.5 0 0 1 1 42.5 V3.5 A2.5 2.5 0 0 1 3.5 1 Z" fill="#fdfdfd" stroke="#d9dbdd" stroke-width="1.5"/><path d="M26 1 V10 H35" fill="none" stroke="#d9dbdd" stroke-width="1.5"/><path d="M12.2 22 L23.5 28 L12.2 34 Z" fill="none" stroke="#3e5ed6" stroke-width="1.8" stroke-linejoin="round"/></svg>
  <div class="abs" style="left:78px;top:252.7px;font-size:16.7px;font-weight:700;color:#30353c;line-height:20px">Castle Fly Around</div>
  <div class="abs" style="left:78px;top:276.7px;font-size:14.5px;color:#72767b;line-height:17px"><span style="text-decoration:underline;text-underline-offset:2px">Download</span> - 28.3 MB</div>
</div>
</body></html>
